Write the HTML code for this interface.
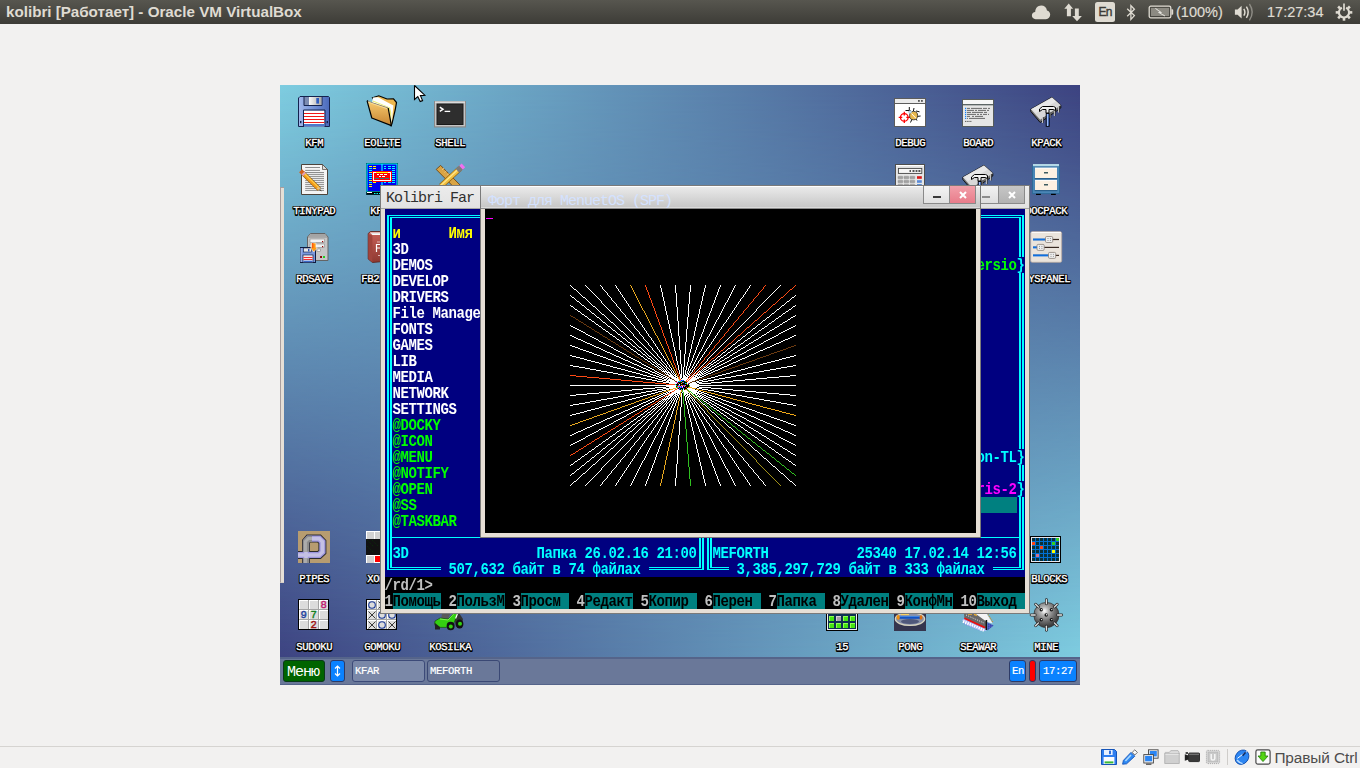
<!DOCTYPE html><html><head><meta charset="utf-8"><title>kolibri</title><style>
*{box-sizing:border-box;margin:0;padding:0}
html,body{width:1360px;height:768px;overflow:hidden;background:#f2f1f0;font-family:"Liberation Sans",sans-serif}
.abs{position:absolute}
#panel{position:absolute;left:0;top:0;width:1360px;height:24px;background:linear-gradient(#57564f,#3d3c37);color:#dfdbd2}
#panel .t{position:absolute;white-space:pre;-webkit-text-stroke:.2px #dfdbd2;font-size:14.5px;line-height:24px;top:0}
#title{position:absolute;left:6px;top:0;font-weight:bold;font-size:15.2px;line-height:24px;white-space:pre;letter-spacing:0px}
#vm{position:absolute;left:280px;top:85px;width:800px;height:600px;overflow:hidden;background:#5e88b1}
#wall1{position:absolute;left:0;top:0;width:800px;height:573px;background:linear-gradient(to right,#7ecde0,#3d4381)}
#wall2{position:absolute;left:0;top:0;width:800px;height:573px;background:linear-gradient(to right,#3d4381,#7ecde0);-webkit-mask-image:linear-gradient(to bottom,rgba(0,0,0,0),rgba(0,0,0,1));mask-image:linear-gradient(to bottom,rgba(0,0,0,0),rgba(0,0,0,1))}
.lbl{position:absolute;font-family:"Liberation Mono",monospace;font-size:10.6px;letter-spacing:-0.36px;line-height:12px;color:#fff;white-space:pre;transform:translateX(-50%);-webkit-text-stroke:0.3px #fff}
.lbb{color:#000;-webkit-text-stroke:2.1px #000;text-shadow:0 1px 0 #000,.5px 1px 0 #000}
.ic{position:absolute;width:32px;height:32px;overflow:visible}
.win{position:absolute;background:#e6dfd6;border:1px solid #7a7a7a}
.tb{position:absolute;left:0;top:0;right:0;height:23px;background:linear-gradient(#f4f4f4 0,#ebebeb 2px,#e2e2e2 22px);border-bottom:1px solid #a4a4a4}
.tba{background:linear-gradient(#ffffff 0,#fdfdfd 1px,#e9e9e9 1.5px,#c7c7c7 21px,#dadada 21.5px,#dadada 22px);border-bottom:1px solid #8a8a8a}
.tbt{position:absolute;font-family:"Liberation Mono",monospace;font-size:15px;letter-spacing:-1px;line-height:16px;white-space:pre}
.con{position:absolute;font-family:"Liberation Mono",monospace;font-weight:bold;font-size:14px;letter-spacing:-0.4px;line-height:16px;white-space:pre;height:16px;transform:scaleY(1.19);transform-origin:0 0;margin-top:-1px}
.c{color:#0ff}.w{color:#fff}.y{color:#ff0}.g{color:#0f0}.m{color:#f0f}.k{color:#000}.s{color:#c0c0c0}
.ln{position:absolute;background:#0ff}
.btn{position:absolute;top:0;width:27px;height:18px;border:1px solid #8a8a8a;border-top:none}
#task{position:absolute;left:0;top:572px;width:800px;height:28px;background:#6a7899;border-top:2px solid #55648a;border-bottom:1px solid #55648a}
.tbtn{position:absolute;top:1px;height:22px;border:1px solid #2d3a66;border-radius:3px}
.t6{font-family:"Liberation Mono",monospace;font-size:10.6px;letter-spacing:-0.36px;line-height:20px;color:#fff;white-space:pre;position:absolute;-webkit-text-stroke:0.2px #fff}
#sbar{position:absolute;left:0;top:746px;width:1360px;height:1px;background:#d6d4d1}
</style></head><body>
<div id="panel">
<div id="title">kolibri [Работает] - Oracle VM VirtualBox</div>
<svg class="abs" style="left:1031px;top:3px" width="20" height="18" viewBox="0 0 20 18"><path d="M4.6 16.2C2.4 16.2 .9 14.6 .9 12.6C.9 10.6 2.4 9.2 4.2 9.1C4.2 5.4 6.8 2.6 10.2 2.6C13.2 2.6 15.4 4.6 16 7.4C17.9 7.7 19.2 9.4 19.2 11.6C19.2 14.2 17.4 16.2 15 16.2Z" fill="#dfdbd2"/></svg>
<svg class="abs" style="left:1063px;top:2px" width="20" height="21" viewBox="0 0 20 21"><path d="M5.7 1.5L10.1 6.8H7.9V14.3H3.9V6.8H1.3Z" fill="#dfdbd2"/><path d="M11.9 6.4H15.8V13.9H18.9L14 19.2L9.2 13.9H11.9Z" fill="#dfdbd2"/></svg>
<div class="abs" style="left:1095px;top:2px;width:20px;height:20px;border-radius:2.5px;background:#dfdbd2"></div>
<div class="abs" style="left:1098.6px;top:2px;font-size:12px;line-height:21px;color:#3c3b37;letter-spacing:-.9px;white-space:pre;-webkit-text-stroke:.4px #3c3b37">En</div>
<svg class="abs" style="left:1125px;top:4px" width="12" height="17" viewBox="0 0 12 17"><path d="M2.2 4.8L9.4 11.6L5.9 15.4V1.6L9.4 5.2L2.2 12.2" fill="none" stroke="#dfdbd2" stroke-width="1.3" stroke-linejoin="miter"/></svg>
<svg class="abs" style="left:1148px;top:5px" width="26" height="14" viewBox="0 0 26 14"><rect x="1.2" y="1.2" width="21.6" height="11.6" rx="1.6" fill="none" stroke="#dfdbd2" stroke-width="1.3"/><rect x="3" y="3" width="18" height="8" fill="#8c8a82"/><path d="M23.4 4.2H24.4Q25.2 4.2 25.2 5V9Q25.2 9.8 24.4 9.8H23.4Z" fill="#dfdbd2"/><path d="M7.4 3.4L13.6 7.6L12 8.2L17 11L10.4 7.4L12.2 6.8Z" fill="#e8e6e0" stroke="#e8e6e0" stroke-width=".6"/></svg>
<div class="t" style="left:1176px">(100%)</div>
<svg class="abs" style="left:1234px;top:2px" width="22" height="20" viewBox="0 0 22 20"><path d="M.9 7.6H3.6L7.6 3.8V16.6L3.6 12.8H.9Z" fill="#dfdbd2"/><path d="M9.8 6.8Q12 10.2 9.8 13.6" fill="none" stroke="#dfdbd2" stroke-width="1.5"/><path d="M12.4 4.6Q16 10.2 12.4 15.8" fill="none" stroke="#dfdbd2" stroke-width="1.5"/><path d="M15.4 2Q21 10.2 15.4 18.4" fill="none" stroke="#8e8c85" stroke-width="1.4"/></svg>
<div class="t" style="left:1267px">17:27:34</div>
<svg class="abs" style="left:1335px;top:3px" width="18" height="19" viewBox="0 0 18 19"><path d="M14.60 9.40L17.30 9.40" stroke="#dfdbd2" stroke-width="2.6"/><path d="M12.96 13.36L14.87 15.27" stroke="#dfdbd2" stroke-width="2.6"/><path d="M9.00 15.00L9.00 17.70" stroke="#dfdbd2" stroke-width="2.6"/><path d="M5.04 13.36L3.13 15.27" stroke="#dfdbd2" stroke-width="2.6"/><path d="M3.40 9.40L0.70 9.40" stroke="#dfdbd2" stroke-width="2.6"/><path d="M5.04 5.44L3.13 3.53" stroke="#dfdbd2" stroke-width="2.6"/><path d="M12.96 5.44L14.87 3.53" stroke="#dfdbd2" stroke-width="2.6"/><path d="M6.9 4.7A5.1 5.1 0 1 0 11.1 4.7" fill="none" stroke="#dfdbd2" stroke-width="2.1"/><path d="M9 .6V7.8" stroke="#dfdbd2" stroke-width="1.7"/></svg>
</div>
<div id="vm">
<div id="wall1"></div><div id="wall2"></div>
<div class="abs" style="left:0;top:102px;width:4px;height:396px;background:#e6dfd6;border-left:1px solid #a89e9e;border-top:1px solid #a89e9e;border-bottom:1px solid #d8d0c8"></div>
<svg class="ic" style="left:18px;top:11px" width="32" height="32" viewBox="0 0 32 32"><defs><linearGradient id="f1" x1="0" x2="1" y1="0" y2="0"><stop offset="0" stop-color="#a2b9ec"/><stop offset=".5" stop-color="#7391d6"/><stop offset="1" stop-color="#4a69bb"/></linearGradient><linearGradient id="f1m" x1="0" x2="1" y1="0" y2="0"><stop offset="0" stop-color="#fafafa"/><stop offset="1" stop-color="#a8a8a8"/></linearGradient></defs><path d="M2 .5H30.5L31.5 1.5V30.5H.5V2Z" fill="url(#f1)" stroke="#14224e"/><path d="M6 1V9.5H24V1" fill="#7c8cb2" stroke="#14224e"/><rect x="11" y="1" width="12.5" height="8" fill="url(#f1m)"/><rect x="18.3" y="2" width="2.7" height="5.6" fill="#2e5cc0"/><rect x="6" y="14.5" width="20.5" height="16" fill="#fff"/><path d="M5.5 30.5V14H27V30.5" fill="none" stroke="#14224e"/><path d="M6 17.5H26.5M6 20.5H26.5M6 23.5H26.5M6 26.5H26.5" stroke="#f01818" stroke-width="1"/><rect x="6" y="28" width="20.5" height="2.5" fill="#4c7acc"/><rect x="2" y="25" width="1.4" height="2.2" fill="#14224e"/><rect x="28.6" y="25" width="1.4" height="2.2" fill="#14224e"/></svg>
<svg class="abs" style="left:20.5px;top:51.0px" width="26" height="14" viewBox="0 0 26 14"><text x="13.2" y="11" text-anchor="middle" font-family="Liberation Mono" font-size="10.6" letter-spacing="-0.36" fill="#000" stroke="#000" stroke-width="2" stroke-linejoin="round">KFM</text><text x="13.2" y="10" text-anchor="middle" font-family="Liberation Mono" font-size="10.6" letter-spacing="-0.36" fill="#000" stroke="#000" stroke-width="2.2" stroke-linejoin="round">KFM</text><text x="13.2" y="10" text-anchor="middle" font-family="Liberation Mono" font-size="10.6" letter-spacing="-0.36" fill="#fff" stroke="#fff" stroke-width=".35">KFM</text></svg>
<svg class="ic" style="left:86px;top:11px" width="32" height="32" viewBox="0 0 32 32"><defs><linearGradient id="fo" x1="0" x2="0" y1="0" y2="1"><stop offset="0" stop-color="#f8cc70"/><stop offset="1" stop-color="#c68432"/></linearGradient></defs><path d="M6.5 1.8L12.8 -.2L21 3L27.5 2.8L30.5 6.5L29.2 14L26 27.5L25 29.8Z" fill="#eeb850" stroke="#000" stroke-width="1.2"/><path d="M7 1.4L12 1.2L27.4 9.6L25.8 27L22.2 12L6 6.4Z" fill="#fff"/><path d="M6.4 5.6L22.4 11.6L25.6 26L25.2 16L24 11.4L7 4.6Z" fill="#e6ec6c" opacity=".9"/><path d="M1.4 4.8L22 11.6L25.4 29.6L5.8 22Z" fill="url(#fo)"/><path d="M2 5.4L22 12" stroke="#5a6a80" stroke-width=".7" fill="none"/><path d="M1.6 6L21.6 12.8" stroke="#fbe09a" stroke-width=".9" fill="none"/><path d="M1.8 4.4L1.2 5.4L5.8 22L25.4 29.6L22.2 12" fill="none" stroke="#000" stroke-width="1.2" stroke-linejoin="round"/></svg>
<svg class="abs" style="left:79.5px;top:51.0px" width="44" height="14" viewBox="0 0 44 14"><text x="22.2" y="11" text-anchor="middle" font-family="Liberation Mono" font-size="10.6" letter-spacing="-0.36" fill="#000" stroke="#000" stroke-width="2" stroke-linejoin="round">EOLITE</text><text x="22.2" y="10" text-anchor="middle" font-family="Liberation Mono" font-size="10.6" letter-spacing="-0.36" fill="#000" stroke="#000" stroke-width="2.2" stroke-linejoin="round">EOLITE</text><text x="22.2" y="10" text-anchor="middle" font-family="Liberation Mono" font-size="10.6" letter-spacing="-0.36" fill="#fff" stroke="#fff" stroke-width=".35">EOLITE</text></svg>
<svg class="ic" style="left:154px;top:11px" width="32" height="32" viewBox="0 0 32 32"><rect x=".5" y="5.5" width="31" height="25.5" fill="#c4c4c4" stroke="#8a8a8a"/><path d="M1 6H31" stroke="#f0f0f0"/><path d="M1 30.5H31" stroke="#9a9a9a"/><rect x="3" y="8" width="26" height="20.5" fill="#2e2e2e" stroke="#1a1a1a"/><path d="M5.8 11.2L9 13.3L5.8 15.4" stroke="#fff" stroke-width="1.5" fill="none"/><path d="M10.6 15.4H16.2" stroke="#fff" stroke-width="1.3"/></svg>
<svg class="abs" style="left:150.5px;top:51.0px" width="38" height="14" viewBox="0 0 38 14"><text x="19.2" y="11" text-anchor="middle" font-family="Liberation Mono" font-size="10.6" letter-spacing="-0.36" fill="#000" stroke="#000" stroke-width="2" stroke-linejoin="round">SHELL</text><text x="19.2" y="10" text-anchor="middle" font-family="Liberation Mono" font-size="10.6" letter-spacing="-0.36" fill="#000" stroke="#000" stroke-width="2.2" stroke-linejoin="round">SHELL</text><text x="19.2" y="10" text-anchor="middle" font-family="Liberation Mono" font-size="10.6" letter-spacing="-0.36" fill="#fff" stroke="#fff" stroke-width=".35">SHELL</text></svg>
<svg class="ic" style="left:18px;top:79px" width="32" height="32" viewBox="0 0 32 32"><path d="M3.5 .5H24.5L29.5 5.5V30.5H3.5Z" fill="#f4f4f4" stroke="#4c443c"/><path d="M24.5 .5V5.5H29.5Z" fill="#dcdcdc" stroke="#4c443c" stroke-width=".7"/><g stroke="#8c8c8c" stroke-width="1"><path d="M7.2 3.5H22.0"/><path d="M7.2 6.4H22.0"/><path d="M7.2 8.5H26.0"/><path d="M7.2 10.4H26.0"/><path d="M7.2 12.4H26.0"/><path d="M7.2 14.4H26.0"/><path d="M7.2 16.4H26.0"/><path d="M7.2 18.4H26.0"/><path d="M7.2 20.4H26.0"/><path d="M7.2 22.4H26.0"/><path d="M7.2 24.4H26.0"/><path d="M7.2 26.4H26.0"/></g><path d="M4.6 8.8L21.2 25.2" stroke="#8a5a10" stroke-width="4.6"/><path d="M4.6 8.8L21.2 25.2" stroke="#f59a18" stroke-width="3.4"/><path d="M5.2 8.2L21.6 24.4" stroke="#ffd04a" stroke-width="1.2"/><path d="M2.6 6.8L5 9.2" stroke="#d2601a" stroke-width="4.2"/><path d="M5 9.2L6.4 10.6" stroke="#e0a0c0" stroke-width="4"/><path d="M20.6 22.4L23.4 27L18.6 24.4Z" fill="#e8c080"/><path d="M22 25.2L24 27.4L21.2 26Z" fill="#222"/></svg>
<svg class="abs" style="left:8.5px;top:119.0px" width="50" height="14" viewBox="0 0 50 14"><text x="25.2" y="11" text-anchor="middle" font-family="Liberation Mono" font-size="10.6" letter-spacing="-0.36" fill="#000" stroke="#000" stroke-width="2" stroke-linejoin="round">TINYPAD</text><text x="25.2" y="10" text-anchor="middle" font-family="Liberation Mono" font-size="10.6" letter-spacing="-0.36" fill="#000" stroke="#000" stroke-width="2.2" stroke-linejoin="round">TINYPAD</text><text x="25.2" y="10" text-anchor="middle" font-family="Liberation Mono" font-size="10.6" letter-spacing="-0.36" fill="#fff" stroke="#fff" stroke-width=".35">TINYPAD</text></svg>
<svg class="ic" style="left:86px;top:78px" width="32" height="32" viewBox="0 0 32 32"><rect x="0" y="0" width="32" height="32" fill="#003848"/><rect x="1" y="1" width="30" height="27.5" fill="#0000f0" stroke="#0ff" stroke-width="1"/><path d="M16 1V28" stroke="#0ff" stroke-width="1.2"/><rect x="1" y="28.5" width="30" height="3" fill="#000"/><path d="M1 29.5H6" stroke="#fff"/><path d="M8 30.5H14" stroke="#0ff" stroke-dasharray="1.5 1"/><path d="M3 3.5H6" stroke="#ff0"/><path d="M3 5.5H6" stroke="#0ff"/><path d="M3 7.5H6" stroke="#0ff"/><path d="M3 9.5H6" stroke="#ff0"/><path d="M3 11.5H6" stroke="#0ff"/><path d="M3 13.5H6" stroke="#0ff"/><path d="M3 15.5H6" stroke="#0ff"/><path d="M3 17.5H6" stroke="#ff0"/><path d="M3 19.5H6" stroke="#0ff"/><path d="M3 21.5H6" stroke="#ff0"/><path d="M3 23.5H6" stroke="#ff0"/><path d="M7 3.5H10" stroke="#ff0"/><path d="M7 5.5H10" stroke="#ff0"/><path d="M7 19.5H10" stroke="#ff0"/><path d="M18 3.5H20M22 3.5H25M26 3.5H29" stroke="#0ff"/><path d="M18 5.5H20M22 5.5H25M26 5.5H29" stroke="#0ff"/><path d="M18 19.5H20M22 19.5H25M26 19.5H29" stroke="#0ff"/><path d="M26 7.5H29" stroke="#0ff"/><path d="M26 9.5H29" stroke="#0ff"/><path d="M26 11.5H29" stroke="#0ff"/><path d="M26 13.5H29" stroke="#0ff"/><path d="M26 15.5H29" stroke="#0ff"/><path d="M26 17.5H29" stroke="#0ff"/><rect x="6" y="8" width="20" height="11" fill="#f00"/><rect x="7.5" y="9.5" width="17" height="8" fill="none" stroke="#fff"/><path d="M10 9.5H22" stroke="#ff0"/><path d="M11 11.5H13M14 11.5H17M18 11.5H21M13 13.5H15M16 13.5H19" stroke="#fff"/><path d="M9 15.5H13M14 15.5H18M19 15.5H23" stroke="#208080"/></svg>
<svg class="abs" style="left:85.5px;top:119.0px" width="32" height="14" viewBox="0 0 32 14"><text x="16.2" y="11" text-anchor="middle" font-family="Liberation Mono" font-size="10.6" letter-spacing="-0.36" fill="#000" stroke="#000" stroke-width="2" stroke-linejoin="round">KFAR</text><text x="16.2" y="10" text-anchor="middle" font-family="Liberation Mono" font-size="10.6" letter-spacing="-0.36" fill="#000" stroke="#000" stroke-width="2.2" stroke-linejoin="round">KFAR</text><text x="16.2" y="10" text-anchor="middle" font-family="Liberation Mono" font-size="10.6" letter-spacing="-0.36" fill="#fff" stroke="#fff" stroke-width=".35">KFAR</text></svg>
<svg class="ic" style="left:154px;top:79px" width="32" height="32" viewBox="0 0 32 32"><path d="M2.2 5.4L6.6 1.4L29 24L24.6 28Z" fill="#d9a444" stroke="#74460e" stroke-width=".9"/><path d="M8 6L10 4M10.6 8.6L12.6 6.6M13.2 11.2L15.2 9.2" stroke="#f0c890" stroke-width=".8"/><path d="M26 4.4L7 22" stroke="#8a5a10" stroke-width="5.4"/><path d="M26 4.4L7 22" stroke="#f0c040" stroke-width="4.2"/><path d="M25.6 4L6.6 21.6" stroke="#ffe690" stroke-width="1.2"/><path d="M27.6 3L23.4 6.8" stroke="#7c7c7c" stroke-width="5.2"/><path d="M29.4 1.4L27 3.6" stroke="#f070f0" stroke-width="5.2"/></svg>
<svg class="ic" style="left:18px;top:147px" width="32" height="32" viewBox="0 0 32 32"><path d="M9.5 5L12.5 1.5H27L30 5V28.5H9.5Z" fill="#c6c6c6" stroke="#646464"/><path d="M10 5H29.5" stroke="#8c8c8c"/><path d="M12.5 2H27L29 4.5H10.5Z" fill="#a4a4a4"/><rect x="12" y="7" width="14.5" height="3.4" fill="#f2f2f2" stroke="#8a8a8a" stroke-width=".6"/><rect x="12" y="12" width="14.5" height="3.4" fill="#f2f2f2" stroke="#8a8a8a" stroke-width=".6"/><rect x="24" y="9" width="1.2" height="1.2" fill="#900"/><rect x="24" y="14" width="1.2" height="1.2" fill="#900"/><rect x="19" y="17" width="3.4" height="2.6" fill="#f4f4f4" stroke="#777" stroke-width=".5"/><rect x="22" y="24" width="2" height="2" fill="#8c1010"/><rect x="25" y="24" width="2" height="2" fill="#20d020"/><rect x="2.5" y="15.5" width="15" height="15" fill="#7a98dc" stroke="#101c40"/><path d="M3 16V30" stroke="#a8c0f0"/><rect x="5.6" y="16" width="8" height="4" fill="#e8e8e8" stroke="#101c40" stroke-width=".6"/><rect x="10" y="17" width="1.4" height="2.4" fill="#2850b8"/><rect x="5" y="23" width="10" height="7.4" fill="#fff" stroke="#101c40" stroke-width=".7"/><path d="M5.4 25.4H14.6M5.4 27.4H14.6" stroke="#f01818"/><rect x="5.4" y="28.6" width="9.2" height="1.6" fill="#3c68c8"/><path d="M13.4 11H17.9V15.8H19.4L15.8 20L12.6 15.8H13.4Z" fill="#ff9a10" stroke="#fff" stroke-width=".5"/><path d="M14 11H15.4V16H14Z" fill="#ff5a10"/></svg>
<svg class="abs" style="left:11.5px;top:187.0px" width="44" height="14" viewBox="0 0 44 14"><text x="22.2" y="11" text-anchor="middle" font-family="Liberation Mono" font-size="10.6" letter-spacing="-0.36" fill="#000" stroke="#000" stroke-width="2" stroke-linejoin="round">RDSAVE</text><text x="22.2" y="10" text-anchor="middle" font-family="Liberation Mono" font-size="10.6" letter-spacing="-0.36" fill="#000" stroke="#000" stroke-width="2.2" stroke-linejoin="round">RDSAVE</text><text x="22.2" y="10" text-anchor="middle" font-family="Liberation Mono" font-size="10.6" letter-spacing="-0.36" fill="#fff" stroke="#fff" stroke-width=".35">RDSAVE</text></svg>
<svg class="ic" style="left:86px;top:147px" width="32" height="32" viewBox="0 0 32 32"><defs><linearGradient id="bk" x1="0" x2="0" y1="0" y2="1"><stop offset="0" stop-color="#c8625a"/><stop offset="1" stop-color="#8e3830"/></linearGradient></defs><path d="M2.2 1.5L4.5 -.5H28V28.5L6.5 30.5L2.2 27Z" fill="url(#bk)" stroke="#5a2018" stroke-width=".8"/><path d="M4 .4H28V3H6.4Z" fill="#fff"/><path d="M4.4 1.6H28" stroke="#c8c8c8" stroke-width=".5"/><path d="M2.4 2L6.4 3.6V30.2L2.4 27Z" fill="#a0443c"/><path d="M10.5 20V12.5H15M10.5 16H14.5" stroke="#fff" stroke-width="1.2" fill="none"/><path d="M11 10H14M12 23.5H14" stroke="#f0d0d0" stroke-width=".8"/></svg>
<svg class="abs" style="left:76.5px;top:187.0px" width="50" height="14" viewBox="0 0 50 14"><text x="25.2" y="11" text-anchor="middle" font-family="Liberation Mono" font-size="10.6" letter-spacing="-0.36" fill="#000" stroke="#000" stroke-width="2" stroke-linejoin="round">FB2READ</text><text x="25.2" y="10" text-anchor="middle" font-family="Liberation Mono" font-size="10.6" letter-spacing="-0.36" fill="#000" stroke="#000" stroke-width="2.2" stroke-linejoin="round">FB2READ</text><text x="25.2" y="10" text-anchor="middle" font-family="Liberation Mono" font-size="10.6" letter-spacing="-0.36" fill="#fff" stroke="#fff" stroke-width=".35">FB2READ</text></svg>
<svg class="ic" style="left:614px;top:11px" width="32" height="32" viewBox="0 0 32 32"><rect x=".5" y="2.5" width="31" height="28" fill="#fff" stroke="#5c5c5c"/><rect x="1" y="3" width="30" height="4" fill="#ebebeb"/><path d="M.5 7.5H31.5" stroke="#5c5c5c"/><rect x="24" y="4" width="1.8" height="1.8" fill="#555"/><rect x="27" y="4" width="1.8" height="1.8" fill="#555"/><circle cx="10.3" cy="21.4" r="3.8" fill="none" stroke="#f00" stroke-width="1.3"/><path d="M10.3 15.8V19.4M10.3 23.4V27M4.7 21.4H8.3M12.3 21.4H15.9" stroke="#f00" stroke-width="1.3"/><path d="M15.3 11V16.5M11.5 14.5H17M20 12L19.4 15M22 15L25.5 15.8M23.5 20.4L26.6 20M18 23L16.5 26.5M22 23L23 24.6" stroke="#111" stroke-width="1"/><ellipse cx="19.6" cy="19.6" rx="4" ry="4.2" fill="#e8b84c" stroke="#222" stroke-width=".8"/><path d="M17.6 17.6L22 22.4" stroke="#fff" stroke-width="1"/><circle cx="16.2" cy="15.8" r="1.6" fill="#b8d8f0"/></svg>
<svg class="abs" style="left:610.5px;top:51.0px" width="38" height="14" viewBox="0 0 38 14"><text x="19.2" y="11" text-anchor="middle" font-family="Liberation Mono" font-size="10.6" letter-spacing="-0.36" fill="#000" stroke="#000" stroke-width="2" stroke-linejoin="round">DEBUG</text><text x="19.2" y="10" text-anchor="middle" font-family="Liberation Mono" font-size="10.6" letter-spacing="-0.36" fill="#000" stroke="#000" stroke-width="2.2" stroke-linejoin="round">DEBUG</text><text x="19.2" y="10" text-anchor="middle" font-family="Liberation Mono" font-size="10.6" letter-spacing="-0.36" fill="#fff" stroke="#fff" stroke-width=".35">DEBUG</text></svg>
<svg class="ic" style="left:682px;top:11px" width="32" height="32" viewBox="0 0 32 32"><rect x=".5" y="3.5" width="31" height="27" fill="#e6e6e6" stroke="#555b5b"/><rect x="1" y="4" width="30" height="4" fill="#f6f6f6"/><path d="M.5 8.7H31.5" stroke="#4c5656" stroke-width="1.2"/><rect x="3" y="11.8" width="1.2" height="1.2" fill="#1080ff"/><path d="M5 12.4H28" stroke="#6a6a6a" stroke-dasharray="3 1 11 1 4 1 3"/><rect x="3" y="13.8" width="1.2" height="1.2" fill="#1080ff"/><path d="M5 14.4H27" stroke="#6a6a6a" stroke-dasharray="7 1 2 1 8 1 3"/><rect x="3" y="15.8" width="1.2" height="1.2" fill="#1080ff"/><path d="M5 16.4H25" stroke="#6a6a6a" stroke-dasharray="4 1 11 1 5"/><rect x="3" y="17.8" width="1.2" height="1.2" fill="#1080ff"/><path d="M5 18.4H27" stroke="#6a6a6a" stroke-dasharray="9 1 2 1 2 1 4 1 2"/><rect x="3" y="19.8" width="1.2" height="1.2" fill="#1080ff"/><path d="M5 20.4H21" stroke="#6a6a6a" stroke-dasharray="3 2 2 1 8"/><rect x="3" y="21.8" width="1.2" height="1.2" fill="#1080ff"/><path d="M5 22.4H23" stroke="#6a6a6a" stroke-dasharray="1 1 17"/><path d="M3 25.4H10" stroke="#555" stroke-dasharray="1.4 .8"/></svg>
<svg class="abs" style="left:678.5px;top:51.0px" width="38" height="14" viewBox="0 0 38 14"><text x="19.2" y="11" text-anchor="middle" font-family="Liberation Mono" font-size="10.6" letter-spacing="-0.36" fill="#000" stroke="#000" stroke-width="2" stroke-linejoin="round">BOARD</text><text x="19.2" y="10" text-anchor="middle" font-family="Liberation Mono" font-size="10.6" letter-spacing="-0.36" fill="#000" stroke="#000" stroke-width="2.2" stroke-linejoin="round">BOARD</text><text x="19.2" y="10" text-anchor="middle" font-family="Liberation Mono" font-size="10.6" letter-spacing="-0.36" fill="#fff" stroke="#fff" stroke-width=".35">BOARD</text></svg>
<svg class="ic" style="left:750px;top:11px" width="32" height="32" viewBox="0 0 32 32"><path d="M.8 13.2L22 1.2L30.8 9.2V12L10.2 26.5L.8 15.5Z" fill="#6a6a6a" stroke="#000" stroke-width=".8"/><path d="M.8 13.2L22 1.2L30.8 9.2L10.2 23.8Z" fill="#d8d8d8"/><path d="M2 13L22 2L26 5.5L6 17Z" fill="#f0f0f0" opacity=".7"/><path d="M12.6 21V27M20 16V22M24.5 13V20M28.6 10V16.5" stroke="#d0d0d0" stroke-width="1.3"/><path d="M13.4 21V27M20.8 16V22M25.3 13V20M29.4 10V16.5" stroke="#222" stroke-width=".7"/><path d="M9.5 15.5V13L12.5 10.5H23.5L25.5 11.5V14.5L23 13.5H19V17H16V13.5H12.5Z" fill="#f2f2f2" stroke="#000" stroke-width="1"/><rect x="16.2" y="17.5" width="3" height="12.8" fill="#5a86e6" stroke="#000" stroke-width=".9"/><rect x="17" y="18" width="1" height="12" fill="#9cbcf8"/></svg>
<svg class="abs" style="left:746.5px;top:51.0px" width="38" height="14" viewBox="0 0 38 14"><text x="19.2" y="11" text-anchor="middle" font-family="Liberation Mono" font-size="10.6" letter-spacing="-0.36" fill="#000" stroke="#000" stroke-width="2" stroke-linejoin="round">KPACK</text><text x="19.2" y="10" text-anchor="middle" font-family="Liberation Mono" font-size="10.6" letter-spacing="-0.36" fill="#000" stroke="#000" stroke-width="2.2" stroke-linejoin="round">KPACK</text><text x="19.2" y="10" text-anchor="middle" font-family="Liberation Mono" font-size="10.6" letter-spacing="-0.36" fill="#fff" stroke="#fff" stroke-width=".35">KPACK</text></svg>
<svg class="ic" style="left:614px;top:79px" width="32" height="32" viewBox="0 0 32 32"><rect x="1.5" y=".5" width="29" height="31" fill="#e6e6e6" stroke="#4e4e4e"/><path d="M2 1.5H30" stroke="#fff"/><rect x="4.4" y="4.4" width="23.4" height="5" fill="#f6f6f6" stroke="#444" stroke-width=".9"/><path d="M15.5 7H17M18.5 7H20.5M21.6 7H23.4M24.4 7H26.4" stroke="#222" stroke-width="1.6"/><rect x="4" y="12.2" width="4.8" height="2.6" rx=".6" fill="#a2a2a2" stroke="#8a8a8a" stroke-width=".4"/><rect x="4" y="16.2" width="4.8" height="2.6" rx=".6" fill="#a2a2a2" stroke="#8a8a8a" stroke-width=".4"/><rect x="4" y="20.2" width="4.8" height="2.6" rx=".6" fill="#a2a2a2" stroke="#8a8a8a" stroke-width=".4"/><rect x="10" y="12.2" width="4.8" height="2.6" rx=".6" fill="#a2a2a2" stroke="#8a8a8a" stroke-width=".4"/><rect x="10" y="16.2" width="4.8" height="2.6" rx=".6" fill="#a2a2a2" stroke="#8a8a8a" stroke-width=".4"/><rect x="10" y="20.2" width="4.8" height="2.6" rx=".6" fill="#a2a2a2" stroke="#8a8a8a" stroke-width=".4"/><rect x="16" y="12.2" width="4.8" height="2.6" rx=".6" fill="#a2a2a2" stroke="#8a8a8a" stroke-width=".4"/><rect x="16" y="16.2" width="4.8" height="2.6" rx=".6" fill="#a2a2a2" stroke="#8a8a8a" stroke-width=".4"/><rect x="16" y="20.2" width="4.8" height="2.6" rx=".6" fill="#a2a2a2" stroke="#8a8a8a" stroke-width=".4"/><rect x="23" y="12.2" width="4.8" height="2.6" fill="#d81818"/><rect x="23" y="16.2" width="4.8" height="2.6" fill="#5a8ad8"/><rect x="23" y="20.2" width="4.8" height="2.6" fill="#3a78d0"/></svg>
<svg class="ic" style="left:682px;top:79px" width="32" height="32" viewBox="0 0 32 32"><path d="M.8 13.2L22 1.2L30.8 9.2V12L10.2 26.5L.8 15.5Z" fill="#6a6a6a" stroke="#000" stroke-width=".8"/><path d="M.8 13.2L22 1.2L30.8 9.2L10.2 23.8Z" fill="#d8d8d8"/><path d="M2 13L22 2L26 5.5L6 17Z" fill="#f0f0f0" opacity=".7"/><path d="M12.6 21V27M20 16V22M24.5 13V20M28.6 10V16.5" stroke="#d0d0d0" stroke-width="1.3"/><path d="M13.4 21V27M20.8 16V22M25.3 13V20M29.4 10V16.5" stroke="#222" stroke-width=".7"/><path d="M9.5 15.5V13L12.5 10.5H23.5L25.5 11.5V14.5L23 13.5H19V17H16V13.5H12.5Z" fill="#f2f2f2" stroke="#000" stroke-width="1"/><rect x="16.2" y="17.5" width="3" height="12.8" fill="#5a86e6" stroke="#000" stroke-width=".9"/><rect x="17" y="18" width="1" height="12" fill="#9cbcf8"/></svg>
<svg class="ic" style="left:750px;top:79px" width="32" height="32" viewBox="0 0 32 32"><rect x="2.5" y="2" width="27" height="27.6" fill="#4a86b6" stroke="#2e6a98"/><rect x="3" y="0" width="26" height="2.2" fill="#b4d8e6"/><rect x="5" y="3.8" width="22" height="10.2" fill="#fdf1e2"/><path d="M5 4.2H27" stroke="#fff" stroke-width=".8"/><path d="M4.6 14.6H27.4" stroke="#2a5f8c" stroke-width="1.2"/><rect x="5" y="16" width="22" height="10" fill="#fdf1e2"/><path d="M5 16.4H27" stroke="#fff" stroke-width=".8"/><path d="M4.6 26.6H27.4" stroke="#2a5f8c" stroke-width="1.2"/><rect x="14" y="8" width="4" height="1.5" fill="#3e5c60"/><rect x="14" y="20" width="4" height="1.5" fill="#3e5c60"/><rect x="6" y="29.8" width="4.8" height="1.2" fill="#000"/><rect x="21" y="29.8" width="4.8" height="1.2" fill="#000"/></svg>
<svg class="abs" style="left:740.5px;top:119.0px" width="50" height="14" viewBox="0 0 50 14"><text x="25.2" y="11" text-anchor="middle" font-family="Liberation Mono" font-size="10.6" letter-spacing="-0.36" fill="#000" stroke="#000" stroke-width="2" stroke-linejoin="round">DOCPACK</text><text x="25.2" y="10" text-anchor="middle" font-family="Liberation Mono" font-size="10.6" letter-spacing="-0.36" fill="#000" stroke="#000" stroke-width="2.2" stroke-linejoin="round">DOCPACK</text><text x="25.2" y="10" text-anchor="middle" font-family="Liberation Mono" font-size="10.6" letter-spacing="-0.36" fill="#fff" stroke="#fff" stroke-width=".35">DOCPACK</text></svg>
<svg class="ic" style="left:750px;top:147px" width="32" height="32" viewBox="0 0 32 32"><rect x=".7" y="-.3" width="31" height="30.6" rx="1.6" fill="#ebe4dc" stroke="#b8a8a0" stroke-width=".8"/><path d="M1.5 .4H31" stroke="#fff"/><path d="M3 7.5H29" stroke="#3a2a22" stroke-width="1.2"/><path d="M3 7.5H15.5" stroke="#1070e0" stroke-width="2"/><rect x="15.5" y="4.5" width="7.2" height="6" rx="1.2" fill="#efefef" stroke="#8a8078" stroke-width=".8"/><path d="M17.5 6.5h1M19.9 6.5h1M17.5 8.5h1M19.9 8.5h1" stroke="#888" stroke-width=".9"/><path d="M3 15.4H29" stroke="#3a2a22" stroke-width="1.2"/><path d="M3 15.4H7.0" stroke="#1070e0" stroke-width="2"/><rect x="7.0" y="12.4" width="7.2" height="6" rx="1.2" fill="#efefef" stroke="#8a8078" stroke-width=".8"/><path d="M9.0 14.4h1M11.4 14.4h1M9.0 16.4h1M11.4 16.4h1" stroke="#888" stroke-width=".9"/><path d="M3 23.4H29" stroke="#3a2a22" stroke-width="1.2"/><path d="M3 23.4H18.5" stroke="#1070e0" stroke-width="2"/><rect x="18.5" y="20.4" width="7.2" height="6" rx="1.2" fill="#efefef" stroke="#8a8078" stroke-width=".8"/><path d="M20.5 22.4h1M22.9 22.4h1M20.5 24.4h1M22.9 24.4h1" stroke="#888" stroke-width=".9"/></svg>
<svg class="abs" style="left:737.5px;top:187.0px" width="56" height="14" viewBox="0 0 56 14"><text x="28.2" y="11" text-anchor="middle" font-family="Liberation Mono" font-size="10.6" letter-spacing="-0.36" fill="#000" stroke="#000" stroke-width="2" stroke-linejoin="round">SYSPANEL</text><text x="28.2" y="10" text-anchor="middle" font-family="Liberation Mono" font-size="10.6" letter-spacing="-0.36" fill="#000" stroke="#000" stroke-width="2.2" stroke-linejoin="round">SYSPANEL</text><text x="28.2" y="10" text-anchor="middle" font-family="Liberation Mono" font-size="10.6" letter-spacing="-0.36" fill="#fff" stroke="#fff" stroke-width=".35">SYSPANEL</text></svg>
<svg class="ic" style="left:18px;top:446px" width="32" height="32" viewBox="0 0 32 32"><rect width="32" height="32" fill="#b79c70"/><path d="M8 32V10.5L10.5 7.6H21.2L24.4 10.8V21L21.2 24H0" fill="none" stroke="#2c2c2c" stroke-width="8"/><path d="M8 32V10.5L10.5 7.6H21.2L24.4 10.8V21L21.2 24H0" fill="none" stroke="#9c94dc" stroke-width="6.2"/><path d="M8 32V10.5L10.5 7.6H21.2L24.4 10.8V21L21.2 24H0" fill="none" stroke="#c4c0e4" stroke-width="3.6"/><path d="M8 32V27.2M8 20.8V10.5L10.5 7.8H14" fill="none" stroke="#8c8c8c" stroke-width="6.2"/><path d="M7.4 32V27.2M7.4 20.8V10.5L10.5 7.4H14" fill="none" stroke="#acacac" stroke-width="3"/></svg>
<svg class="abs" style="left:14.5px;top:487.0px" width="38" height="14" viewBox="0 0 38 14"><text x="19.2" y="11" text-anchor="middle" font-family="Liberation Mono" font-size="10.6" letter-spacing="-0.36" fill="#000" stroke="#000" stroke-width="2" stroke-linejoin="round">PIPES</text><text x="19.2" y="10" text-anchor="middle" font-family="Liberation Mono" font-size="10.6" letter-spacing="-0.36" fill="#000" stroke="#000" stroke-width="2.2" stroke-linejoin="round">PIPES</text><text x="19.2" y="10" text-anchor="middle" font-family="Liberation Mono" font-size="10.6" letter-spacing="-0.36" fill="#fff" stroke="#fff" stroke-width=".35">PIPES</text></svg>
<svg class="ic" style="left:86px;top:446px" width="32" height="32" viewBox="0 0 32 32"><rect x="0" y="8" width="32" height="16" fill="#111"/><path d="M1 9L8 16M6 9L12 15M1 15L8 22" stroke="#083808" stroke-width=".7" stroke-dasharray="1.2 1.2"/><rect x="0" y="0" width="8" height="8" fill="#d2d2d2"/><path d="M0 0.5H8M0.5 0V8" stroke="#fff" stroke-width="1"/><rect x="8" y="0" width="8" height="8" fill="#d2d2d2"/><path d="M8 0.5H16M8.5 0V8" stroke="#fff" stroke-width="1"/><rect x="16" y="0" width="8" height="8" fill="#d2d2d2"/><path d="M16 0.5H24M16.5 0V8" stroke="#fff" stroke-width="1"/><rect x="24" y="0" width="8" height="8" fill="#d2d2d2"/><path d="M24 0.5H32M24.5 0V8" stroke="#fff" stroke-width="1"/><rect x="0" y="24" width="8" height="8" fill="#d2d2d2"/><path d="M0 24.5H8M0.5 24V32" stroke="#fff" stroke-width="1"/><rect x="8" y="24" width="8" height="8" fill="#fff"/><rect x="9" y="25" width="7" height="6" fill="#f00"/><rect x="16" y="24" width="8" height="8" fill="#d2d2d2"/><path d="M16 24.5H24M16.5 24V32" stroke="#fff" stroke-width="1"/><rect x="24" y="24" width="8" height="8" fill="#d2d2d2"/><path d="M24 24.5H32M24.5 24V32" stroke="#fff" stroke-width="1"/></svg>
<svg class="abs" style="left:82.5px;top:487.0px" width="38" height="14" viewBox="0 0 38 14"><text x="19.2" y="11" text-anchor="middle" font-family="Liberation Mono" font-size="10.6" letter-spacing="-0.36" fill="#000" stroke="#000" stroke-width="2" stroke-linejoin="round">XONIX</text><text x="19.2" y="10" text-anchor="middle" font-family="Liberation Mono" font-size="10.6" letter-spacing="-0.36" fill="#000" stroke="#000" stroke-width="2.2" stroke-linejoin="round">XONIX</text><text x="19.2" y="10" text-anchor="middle" font-family="Liberation Mono" font-size="10.6" letter-spacing="-0.36" fill="#fff" stroke="#fff" stroke-width=".35">XONIX</text></svg>
<svg class="ic" style="left:750px;top:446px" width="32" height="32" viewBox="0 0 32 32"><rect x=".5" y="5.5" width="30" height="26" fill="#0070d2" stroke="#000"/><rect x="1.5" y="6.5" width="28" height="24" fill="none" stroke="#e8e8f0" stroke-width="1"/><rect x="2" y="7" width="27" height="23" fill="#0070d2"/><rect x="2" y="7" width="3" height="3" fill="#0a3038"/><rect x="6" y="7" width="3" height="3" fill="#0a3038"/><rect x="10" y="7" width="3" height="3" fill="#0a3038"/><rect x="14" y="7" width="3" height="3" fill="#0a3038"/><rect x="18" y="7" width="3" height="3" fill="#0a3038"/><rect x="22" y="7" width="3" height="3" fill="#0a3038"/><rect x="26" y="7" width="3" height="3" fill="#30d020"/><rect x="2" y="11" width="3" height="3" fill="#ff4210"/><rect x="6" y="11" width="3" height="3" fill="#0a3038"/><rect x="10" y="11" width="3" height="3" fill="#0a3038"/><rect x="14" y="11" width="3" height="3" fill="#0a3038"/><rect x="18" y="11" width="3" height="3" fill="#0a3038"/><rect x="22" y="11" width="3" height="3" fill="#30d020"/><rect x="26" y="11" width="3" height="3" fill="#0a3038"/><rect x="2" y="15" width="3" height="3" fill="#0a3038"/><rect x="6" y="15" width="3" height="3" fill="#0a3038"/><rect x="10" y="15" width="3" height="3" fill="#ff4210"/><rect x="14" y="15" width="3" height="3" fill="#0a3038"/><rect x="18" y="15" width="3" height="3" fill="#0a3038"/><rect x="22" y="15" width="3" height="3" fill="#0a3038"/><rect x="26" y="15" width="3" height="3" fill="#0a3038"/><rect x="2" y="19" width="3" height="3" fill="#0a3038"/><rect x="6" y="19" width="3" height="3" fill="#0a3038"/><rect x="10" y="19" width="3" height="3" fill="#0a3038"/><rect x="14" y="19" width="3" height="3" fill="#0a3038"/><rect x="18" y="19" width="3" height="3" fill="#0a3038"/><rect x="22" y="19" width="3" height="3" fill="#ffff00"/><rect x="26" y="19" width="3" height="3" fill="#0a3038"/><rect x="2" y="23" width="3" height="3" fill="#0a3038"/><rect x="6" y="23" width="3" height="3" fill="#d07090"/><rect x="10" y="23" width="3" height="3" fill="#0a3038"/><rect x="14" y="23" width="3" height="3" fill="#0a3038"/><rect x="18" y="23" width="3" height="3" fill="#0a3038"/><rect x="22" y="23" width="3" height="3" fill="#0a3038"/><rect x="26" y="23" width="3" height="3" fill="#0a3038"/><rect x="2" y="27" width="3" height="3" fill="#0a3038"/><rect x="6" y="27" width="3" height="3" fill="#0a3038"/><rect x="10" y="27" width="3" height="3" fill="#0a3038"/><rect x="14" y="27" width="3" height="3" fill="#0a3038"/><rect x="18" y="27" width="3" height="3" fill="#0a3038"/><rect x="22" y="27" width="3" height="3" fill="#0a3038"/><rect x="26" y="27" width="3" height="3" fill="#0a3038"/></svg>
<svg class="abs" style="left:746.5px;top:487.0px" width="44" height="14" viewBox="0 0 44 14"><text x="22.2" y="11" text-anchor="middle" font-family="Liberation Mono" font-size="10.6" letter-spacing="-0.36" fill="#000" stroke="#000" stroke-width="2" stroke-linejoin="round">BLOCKS</text><text x="22.2" y="10" text-anchor="middle" font-family="Liberation Mono" font-size="10.6" letter-spacing="-0.36" fill="#000" stroke="#000" stroke-width="2.2" stroke-linejoin="round">BLOCKS</text><text x="22.2" y="10" text-anchor="middle" font-family="Liberation Mono" font-size="10.6" letter-spacing="-0.36" fill="#fff" stroke="#fff" stroke-width=".35">BLOCKS</text></svg>
<svg class="ic" style="left:18px;top:514px" width="32" height="32" viewBox="0 0 32 32"><rect x=".5" y=".5" width="30" height="30" fill="#dcdcdc" stroke="#000"/><path d="M1 1.5H10M1.5 1V10" stroke="#fff" stroke-width="1"/><path d="M1 11.5H10M1.5 11V20" stroke="#fff" stroke-width="1"/><path d="M1 21.5H10M1.5 21V30" stroke="#fff" stroke-width="1"/><path d="M11 1.5H20M11.5 1V10" stroke="#fff" stroke-width="1"/><path d="M11 11.5H20M11.5 11V20" stroke="#fff" stroke-width="1"/><path d="M11 21.5H20M11.5 21V30" stroke="#fff" stroke-width="1"/><path d="M21 1.5H30M21.5 1V10" stroke="#fff" stroke-width="1"/><path d="M21 11.5H30M21.5 11V20" stroke="#fff" stroke-width="1"/><path d="M21 21.5H30M21.5 21V30" stroke="#fff" stroke-width="1"/><path d="M10.5 1V30M20.5 1V30M1 10.5H30M1 20.5H30" stroke="#a4a4a4" stroke-width="1"/><text x="22.6" y="9.0" font-family="Liberation Mono" font-size="10.6" fill="#c01870" stroke="#c01870" stroke-width=".4">8</text><text x="2.6" y="19.0" font-family="Liberation Mono" font-size="10.6" fill="#2040a0" stroke="#2040a0" stroke-width=".4">9</text><text x="12.6" y="19.0" font-family="Liberation Mono" font-size="10.6" fill="#108020" stroke="#108020" stroke-width=".4">7</text><text x="12.6" y="29.0" font-family="Liberation Mono" font-size="10.6" fill="#a01010" stroke="#a01010" stroke-width=".4">2</text></svg>
<svg class="abs" style="left:11.5px;top:555.0px" width="44" height="14" viewBox="0 0 44 14"><text x="22.2" y="11" text-anchor="middle" font-family="Liberation Mono" font-size="10.6" letter-spacing="-0.36" fill="#000" stroke="#000" stroke-width="2" stroke-linejoin="round">SUDOKU</text><text x="22.2" y="10" text-anchor="middle" font-family="Liberation Mono" font-size="10.6" letter-spacing="-0.36" fill="#000" stroke="#000" stroke-width="2.2" stroke-linejoin="round">SUDOKU</text><text x="22.2" y="10" text-anchor="middle" font-family="Liberation Mono" font-size="10.6" letter-spacing="-0.36" fill="#fff" stroke="#fff" stroke-width=".35">SUDOKU</text></svg>
<svg class="ic" style="left:86px;top:514px" width="32" height="32" viewBox="0 0 32 32"><rect x=".5" y=".5" width="30" height="30" fill="#dcdcdc" stroke="#000"/><path d="M1 1.5H10M1.5 1V10" stroke="#fff" stroke-width="1"/><path d="M1 11.5H10M1.5 11V20" stroke="#fff" stroke-width="1"/><path d="M1 21.5H10M1.5 21V30" stroke="#fff" stroke-width="1"/><path d="M11 1.5H20M11.5 1V10" stroke="#fff" stroke-width="1"/><path d="M11 11.5H20M11.5 11V20" stroke="#fff" stroke-width="1"/><path d="M11 21.5H20M11.5 21V30" stroke="#fff" stroke-width="1"/><path d="M21 1.5H30M21.5 1V10" stroke="#fff" stroke-width="1"/><path d="M21 11.5H30M21.5 11V20" stroke="#fff" stroke-width="1"/><path d="M21 21.5H30M21.5 21V30" stroke="#fff" stroke-width="1"/><path d="M10.5 1V30M20.5 1V30M1 10.5H30M1 20.5H30" stroke="#a4a4a4" stroke-width="1"/><circle cx="6" cy="6" r="3.3" stroke="#183898" stroke-width="1.1" fill="none"/><path d="M12.5 2.5l7 7m0 -7l-7 7" stroke="#2a2a2a" stroke-width=".9" fill="none"/><circle cx="26" cy="6" r="3.3" stroke="#183898" stroke-width="1.1" fill="none"/><path d="M2.5 12.5l7 7m0 -7l-7 7" stroke="#2a2a2a" stroke-width=".9" fill="none"/><circle cx="16" cy="16" r="3.3" stroke="#183898" stroke-width="1.1" fill="none"/><circle cx="26" cy="16" r="3.3" stroke="#183898" stroke-width="1.1" fill="none"/><path d="M2.5 22.5l7 7m0 -7l-7 7" stroke="#2a2a2a" stroke-width=".9" fill="none"/><circle cx="16" cy="26" r="3.3" stroke="#183898" stroke-width="1.1" fill="none"/><path d="M22.5 22.5l7 7m0 -7l-7 7" stroke="#2a2a2a" stroke-width=".9" fill="none"/></svg>
<svg class="abs" style="left:79.5px;top:555.0px" width="44" height="14" viewBox="0 0 44 14"><text x="22.2" y="11" text-anchor="middle" font-family="Liberation Mono" font-size="10.6" letter-spacing="-0.36" fill="#000" stroke="#000" stroke-width="2" stroke-linejoin="round">GOMOKU</text><text x="22.2" y="10" text-anchor="middle" font-family="Liberation Mono" font-size="10.6" letter-spacing="-0.36" fill="#000" stroke="#000" stroke-width="2.2" stroke-linejoin="round">GOMOKU</text><text x="22.2" y="10" text-anchor="middle" font-family="Liberation Mono" font-size="10.6" letter-spacing="-0.36" fill="#fff" stroke="#fff" stroke-width=".35">GOMOKU</text></svg>
<svg class="ic" style="left:154px;top:514px" width="32" height="32" viewBox="0 0 32 32"><path d="M7 20L8 15H16L14 20Z" fill="#5a5a5a"/><path d="M19 14L25 14L29 20L28 26L22 28Z" fill="#333"/><path d="M1 22L6 19L14 20L19.5 14.6H23.6L19.6 25L12 28.4H2L.6 25Z" fill="#34d012" stroke="#0c3a06" stroke-width=".6"/><path d="M6 20L14 21L19.6 15" stroke="#7cf050" stroke-width="1" fill="none"/><path d="M23.4 15L21.6 19.4" stroke="#fff" stroke-width="1.2"/><path d="M1 24V30.5H6V28" fill="#222"/><ellipse cx="16.6" cy="27" rx="4" ry="4.2" fill="#111"/><circle cx="16.8" cy="27.4" r="2" fill="#34d012"/><ellipse cx="25.6" cy="25" rx="3.8" ry="4.6" fill="#111"/><circle cx="26" cy="24.8" r="2" fill="#34d012"/></svg>
<svg class="abs" style="left:144.5px;top:555.0px" width="50" height="14" viewBox="0 0 50 14"><text x="25.2" y="11" text-anchor="middle" font-family="Liberation Mono" font-size="10.6" letter-spacing="-0.36" fill="#000" stroke="#000" stroke-width="2" stroke-linejoin="round">KOSILKA</text><text x="25.2" y="10" text-anchor="middle" font-family="Liberation Mono" font-size="10.6" letter-spacing="-0.36" fill="#000" stroke="#000" stroke-width="2.2" stroke-linejoin="round">KOSILKA</text><text x="25.2" y="10" text-anchor="middle" font-family="Liberation Mono" font-size="10.6" letter-spacing="-0.36" fill="#fff" stroke="#fff" stroke-width=".35">KOSILKA</text></svg>
<svg class="ic" style="left:546px;top:514px" width="32" height="32" viewBox="0 0 32 32"><rect x=".5" y=".5" width="31" height="31" fill="#0e3052" stroke="#000"/><rect x="1.5" y="1.5" width="29" height="29" fill="none" stroke="#f0f0f0"/><rect x="3" y="3" width="5" height="5" fill="#44e412"/><path d="M3 3.5h5M3.5 3v5" stroke="#90ff50" stroke-width="1"/><rect x="10" y="3" width="5" height="5" fill="#44e412"/><path d="M10 3.5h5M10.5 3v5" stroke="#90ff50" stroke-width="1"/><rect x="17" y="3" width="5" height="5" fill="#44e412"/><path d="M17 3.5h5M17.5 3v5" stroke="#90ff50" stroke-width="1"/><rect x="24" y="3" width="5" height="5" fill="#44e412"/><path d="M24 3.5h5M24.5 3v5" stroke="#90ff50" stroke-width="1"/><rect x="3" y="10" width="5" height="5" fill="#44e412"/><path d="M3 10.5h5M3.5 10v5" stroke="#90ff50" stroke-width="1"/><rect x="10" y="10" width="5" height="5" fill="#44e412"/><path d="M10 10.5h5M10.5 10v5" stroke="#90ff50" stroke-width="1"/><rect x="17" y="10" width="5" height="5" fill="#44e412"/><path d="M17 10.5h5M17.5 10v5" stroke="#90ff50" stroke-width="1"/><rect x="24" y="10" width="5" height="5" fill="#44e412"/><path d="M24 10.5h5M24.5 10v5" stroke="#90ff50" stroke-width="1"/><rect x="3" y="17" width="5" height="5" fill="#44e412"/><path d="M3 17.5h5M3.5 17v5" stroke="#90ff50" stroke-width="1"/><rect x="10" y="17" width="5" height="5" fill="#a8a0a8"/><path d="M10 17.5h5M10.5 17v5" stroke="#d8d0d8" stroke-width="1"/><rect x="17" y="17" width="5" height="5" fill="#44e412"/><path d="M17 17.5h5M17.5 17v5" stroke="#90ff50" stroke-width="1"/><rect x="24" y="17" width="5" height="5" fill="#44e412"/><path d="M24 17.5h5M24.5 17v5" stroke="#90ff50" stroke-width="1"/><rect x="3" y="24" width="5" height="5" fill="#44e412"/><path d="M3 24.5h5M3.5 24v5" stroke="#90ff50" stroke-width="1"/><rect x="10" y="24" width="5" height="5" fill="#44e412"/><path d="M10 24.5h5M10.5 24v5" stroke="#90ff50" stroke-width="1"/><rect x="17" y="24" width="5" height="5" fill="#44e412"/><path d="M17 24.5h5M17.5 24v5" stroke="#90ff50" stroke-width="1"/><rect x="24" y="24" width="5" height="5" fill="#44e412"/><path d="M24 24.5h5M24.5 24v5" stroke="#90ff50" stroke-width="1"/></svg>
<svg class="abs" style="left:551.5px;top:555.0px" width="20" height="14" viewBox="0 0 20 14"><text x="10.2" y="11" text-anchor="middle" font-family="Liberation Mono" font-size="10.6" letter-spacing="-0.36" fill="#000" stroke="#000" stroke-width="2" stroke-linejoin="round">15</text><text x="10.2" y="10" text-anchor="middle" font-family="Liberation Mono" font-size="10.6" letter-spacing="-0.36" fill="#000" stroke="#000" stroke-width="2.2" stroke-linejoin="round">15</text><text x="10.2" y="10" text-anchor="middle" font-family="Liberation Mono" font-size="10.6" letter-spacing="-0.36" fill="#fff" stroke="#fff" stroke-width=".35">15</text></svg>
<svg class="ic" style="left:614px;top:514px" width="32" height="32" viewBox="0 0 32 32"><rect x="0" y="0" width="32" height="32" fill="#35354e"/><ellipse cx="16" cy="20" rx="14.6" ry="6.4" fill="#8890a8" stroke="#d8d4c0" stroke-width="1.4"/><ellipse cx="16" cy="22.5" rx="9" ry="2.6" fill="#50587a"/><rect x="4" y="17" width="23" height="2.8" fill="#1252c4"/><path d="M5 17.4H26" stroke="#60a0f0" stroke-width=".7"/><ellipse cx="4.2" cy="18.4" rx="1.6" ry="2.4" fill="#f09010"/><ellipse cx="27" cy="18.4" rx="1.4" ry="2.2" fill="#e07010"/><path d="M7 15.4H15" stroke="#f8d060" stroke-width="1.4"/></svg>
<svg class="abs" style="left:613.5px;top:555.0px" width="32" height="14" viewBox="0 0 32 14"><text x="16.2" y="11" text-anchor="middle" font-family="Liberation Mono" font-size="10.6" letter-spacing="-0.36" fill="#000" stroke="#000" stroke-width="2" stroke-linejoin="round">PONG</text><text x="16.2" y="10" text-anchor="middle" font-family="Liberation Mono" font-size="10.6" letter-spacing="-0.36" fill="#000" stroke="#000" stroke-width="2.2" stroke-linejoin="round">PONG</text><text x="16.2" y="10" text-anchor="middle" font-family="Liberation Mono" font-size="10.6" letter-spacing="-0.36" fill="#fff" stroke="#fff" stroke-width=".35">PONG</text></svg>
<svg class="ic" style="left:682px;top:514px" width="32" height="32" viewBox="0 0 32 32"><path d="M0 21.2L2.4 19.2L24 28.4V32H19L3.4 25.6Z" fill="#a8b8f4"/><path d="M1 22.4L22 31.4" stroke="#fff" stroke-width="3" stroke-dasharray="1.4 1"/><path d="M2 24.6L17 31" stroke="#7c8ce8" stroke-width="1" stroke-dasharray="1 1.6"/><path d="M2 15H14L24 21.4V29.4L2.4 19.6Z" fill="#686868"/><path d="M2.4 19.2L23 28.6" stroke="#e81010" stroke-width="1.8"/><path d="M4 16L22 24" stroke="#e8e8e8" stroke-width="1" stroke-dasharray="1 1.4"/><path d="M6 15H10M12 15.4L15 16.4M20 18L24 21" stroke="#f0b030" stroke-width="1.4"/><path d="M14 15H25L30.6 24.4L25 23Z" fill="#f4f4f4"/><path d="M26 15.4L31 23.4" stroke="#c89030" stroke-width="1.2" stroke-dasharray="1 1"/><path d="M24.4 21V31" stroke="#111" stroke-width="1.6"/><path d="M25.4 23.6L31.6 26.4L25.4 31.4Z" fill="#3848b0"/><path d="M25.4 24L31 26.4M25.4 26L29.6 27.8M25.4 28L28 29" stroke="#7888e0" stroke-width=".8" stroke-dasharray="1 1"/></svg>
<svg class="abs" style="left:675.5px;top:555.0px" width="44" height="14" viewBox="0 0 44 14"><text x="22.2" y="11" text-anchor="middle" font-family="Liberation Mono" font-size="10.6" letter-spacing="-0.36" fill="#000" stroke="#000" stroke-width="2" stroke-linejoin="round">SEAWAR</text><text x="22.2" y="10" text-anchor="middle" font-family="Liberation Mono" font-size="10.6" letter-spacing="-0.36" fill="#000" stroke="#000" stroke-width="2.2" stroke-linejoin="round">SEAWAR</text><text x="22.2" y="10" text-anchor="middle" font-family="Liberation Mono" font-size="10.6" letter-spacing="-0.36" fill="#fff" stroke="#fff" stroke-width=".35">SEAWAR</text></svg>
<svg class="ic" style="left:750px;top:514px" width="32" height="32" viewBox="0 0 32 32"><defs><radialGradient id="mn" cx=".42" cy=".34" r=".7"><stop offset="0" stop-color="#ffffff"/><stop offset=".25" stop-color="#b0b0b0"/><stop offset=".6" stop-color="#6c6c6c"/><stop offset="1" stop-color="#2c2c2c"/></radialGradient></defs><circle cx="16.4" cy="16" r="12.6" fill="url(#mn)" stroke="#3a3a3a" stroke-width=".8"/><path d="M27.6 16.0L31.7 16.0" stroke="#2a2a2a" stroke-width="2.8" stroke-linecap="round"/><path d="M27.6 16.0L31.7 16.0" stroke="#e4e4e4" stroke-width="1.3" stroke-linecap="round"/><path d="M24.3 23.9L27.2 26.8" stroke="#2a2a2a" stroke-width="2.8" stroke-linecap="round"/><path d="M24.3 23.9L27.2 26.8" stroke="#e4e4e4" stroke-width="1.3" stroke-linecap="round"/><path d="M16.4 27.2L16.4 31.3" stroke="#2a2a2a" stroke-width="2.8" stroke-linecap="round"/><path d="M16.4 27.2L16.4 31.3" stroke="#e4e4e4" stroke-width="1.3" stroke-linecap="round"/><path d="M8.5 23.9L5.6 26.8" stroke="#2a2a2a" stroke-width="2.8" stroke-linecap="round"/><path d="M8.5 23.9L5.6 26.8" stroke="#e4e4e4" stroke-width="1.3" stroke-linecap="round"/><path d="M5.2 16.0L1.1 16.0" stroke="#2a2a2a" stroke-width="2.8" stroke-linecap="round"/><path d="M5.2 16.0L1.1 16.0" stroke="#e4e4e4" stroke-width="1.3" stroke-linecap="round"/><path d="M8.5 8.1L5.6 5.2" stroke="#2a2a2a" stroke-width="2.8" stroke-linecap="round"/><path d="M8.5 8.1L5.6 5.2" stroke="#e4e4e4" stroke-width="1.3" stroke-linecap="round"/><path d="M16.4 4.8L16.4 0.7" stroke="#2a2a2a" stroke-width="2.8" stroke-linecap="round"/><path d="M16.4 4.8L16.4 0.7" stroke="#e4e4e4" stroke-width="1.3" stroke-linecap="round"/><path d="M24.3 8.1L27.2 5.2" stroke="#2a2a2a" stroke-width="2.8" stroke-linecap="round"/><path d="M24.3 8.1L27.2 5.2" stroke="#e4e4e4" stroke-width="1.3" stroke-linecap="round"/><circle cx="11.2" cy="10.8" r="1.7" fill="#161616"/><circle cx="11.6" cy="10.6" r=".7" fill="#f4f4f4"/><circle cx="21.4" cy="10.8" r="1.7" fill="#161616"/><circle cx="21.8" cy="10.6" r=".7" fill="#f4f4f4"/><circle cx="16.2" cy="16.0" r="1.7" fill="#161616"/><circle cx="16.6" cy="15.8" r=".7" fill="#f4f4f4"/><circle cx="11.2" cy="20.8" r="1.7" fill="#161616"/><circle cx="11.6" cy="20.6" r=".7" fill="#f4f4f4"/><circle cx="21.4" cy="20.8" r="1.7" fill="#161616"/><circle cx="21.8" cy="20.6" r=".7" fill="#f4f4f4"/></svg>
<svg class="abs" style="left:749.5px;top:555.0px" width="32" height="14" viewBox="0 0 32 14"><text x="16.2" y="11" text-anchor="middle" font-family="Liberation Mono" font-size="10.6" letter-spacing="-0.36" fill="#000" stroke="#000" stroke-width="2" stroke-linejoin="round">MINE</text><text x="16.2" y="10" text-anchor="middle" font-family="Liberation Mono" font-size="10.6" letter-spacing="-0.36" fill="#000" stroke="#000" stroke-width="2.2" stroke-linejoin="round">MINE</text><text x="16.2" y="10" text-anchor="middle" font-family="Liberation Mono" font-size="10.6" letter-spacing="-0.36" fill="#fff" stroke="#fff" stroke-width=".35">MINE</text></svg>
<div class="win" style="left:100px;top:100px;width:650px;height:429px">
<div class="tb"></div>
<div class="tbt" style="left:5px;top:5px;color:#303030">Kolibri Far</div>
<div class="btn" style="left:591px;background:linear-gradient(#f2f2f2,#dedede)"><div class="abs" style="left:9px;top:10px;width:8px;height:2px;background:#8c8c8c"></div></div>
<div class="btn" style="left:617px;background:linear-gradient(#c6c6c6,#b2b2b2)"><svg class="abs" style="left:8px;top:4px" width="10" height="10" viewBox="0 0 10 10"><path d="M2 2L8 8M8 2L2 8" stroke="#fff" stroke-width="2"/></svg></div>
<div class="abs" id="kcon" style="left:4px;top:23px;width:640px;height:400px;background:#000080;overflow:hidden">
<div class="ln" style="left:2px;top:6px;width:317px;height:1px"></div>
<div class="ln" style="left:5px;top:8px;width:311px;height:1px"></div>
<div class="ln" style="left:2px;top:6px;width:2px;height:355px"></div>
<div class="ln" style="left:5px;top:8px;width:2px;height:351px"></div>
<div class="ln" style="left:317px;top:6px;width:2px;height:355px"></div>
<div class="ln" style="left:314px;top:8px;width:2px;height:351px"></div>
<div class="ln" style="left:7px;top:328px;width:307px;height:1px"></div>
<div class="ln" style="left:322px;top:6px;width:317px;height:1px"></div>
<div class="ln" style="left:325px;top:8px;width:311px;height:1px"></div>
<div class="ln" style="left:322px;top:6px;width:2px;height:355px"></div>
<div class="ln" style="left:325px;top:8px;width:2px;height:351px"></div>
<div class="ln" style="left:637px;top:6px;width:2px;height:355px"></div>
<div class="ln" style="left:634px;top:8px;width:2px;height:351px"></div>
<div class="ln" style="left:327px;top:328px;width:307px;height:1px"></div>
<div class="ln" style="left:5px;top:358px;width:51px;height:1px"></div>
<div class="ln" style="left:2px;top:360px;width:54px;height:1px"></div>
<div class="ln" style="left:264px;top:358px;width:52px;height:1px"></div>
<div class="ln" style="left:264px;top:360px;width:55px;height:1px"></div>
<div class="ln" style="left:325px;top:358px;width:19px;height:1px"></div>
<div class="ln" style="left:322px;top:360px;width:22px;height:1px"></div>
<div class="ln" style="left:608px;top:358px;width:28px;height:1px"></div>
<div class="ln" style="left:608px;top:360px;width:31px;height:1px"></div>
<div class="abs" style="left:632px;top:48px;width:8px;height:16px;background:#000080"></div>
<div class="abs" style="left:632px;top:240px;width:8px;height:16px;background:#000080"></div>
<div class="abs" style="left:632px;top:272px;width:8px;height:16px;background:#000080"></div>
<div class="abs" style="left:536px;top:288px;width:96px;height:16px;background:#008080"></div>
<div class="con y" style="left:7.4px;top:16px;">и</div>
<div class="con y" style="left:63.4px;top:16px;">Имя</div>
<div class="con w" style="left:7.4px;top:32px;">3D</div>
<div class="con w" style="left:7.4px;top:48px;">DEMOS</div>
<div class="con w" style="left:7.4px;top:64px;">DEVELOP</div>
<div class="con w" style="left:7.4px;top:80px;">DRIVERS</div>
<div class="con w" style="left:7.4px;top:96px;">File Manage</div>
<div class="con w" style="left:7.4px;top:112px;">FONTS</div>
<div class="con w" style="left:7.4px;top:128px;">GAMES</div>
<div class="con w" style="left:7.4px;top:144px;">LIB</div>
<div class="con w" style="left:7.4px;top:160px;">MEDIA</div>
<div class="con w" style="left:7.4px;top:176px;">NETWORK</div>
<div class="con w" style="left:7.4px;top:192px;">SETTINGS</div>
<div class="con g" style="left:7.4px;top:208px;">@DOCKY</div>
<div class="con g" style="left:7.4px;top:224px;">@ICON</div>
<div class="con g" style="left:7.4px;top:240px;">@MENU</div>
<div class="con g" style="left:7.4px;top:256px;">@NOTIFY</div>
<div class="con g" style="left:7.4px;top:272px;">@OPEN</div>
<div class="con g" style="left:7.4px;top:288px;">@SS</div>
<div class="con g" style="left:7.4px;top:304px;">@TASKBAR</div>
<div class="con g" style="left:591.4px;top:48px;">ersio</div>
<div class="con c" style="left:631.4px;top:48px;">}</div>
<div class="con c" style="left:591.4px;top:240px;">on-TL</div>
<div class="con c" style="left:631.4px;top:240px;">}</div>
<div class="con m" style="left:591.4px;top:272px;">ris-2</div>
<div class="con c" style="left:631.4px;top:272px;">}</div>
<div class="con c" style="left:7.4px;top:336px;">3D</div>
<div class="con c" style="left:151.4px;top:336px;">Папка 26.02.16 21:00</div>
<div class="con c" style="left:327.4px;top:336px;">MEFORTH</div>
<div class="con c" style="left:471.4px;top:336px;">25340 17.02.14 12:56</div>
<div class="con c" style="left:63.4px;top:352px;">507,632 байт в 74 файлах</div>
<div class="con c" style="left:351.4px;top:352px;">3,385,297,729 байт в 333 файлах</div>
<div class="abs" style="left:0;top:368px;width:640px;height:32px;background:#000"></div>
<div class="con s" style="left:-0.6px;top:368px;">/rd/1&gt;</div>
<div class="con s" style="left:-0.6px;top:384px;">1</div>
<div class="abs" style="left:8px;top:384px;width:48px;height:16px;background:#008080"></div>
<div class="con k" style="left:7.4px;top:384px;">Помощь</div>
<div class="con s" style="left:63.4px;top:384px;">2</div>
<div class="abs" style="left:72px;top:384px;width:48px;height:16px;background:#008080"></div>
<div class="con k" style="left:71.4px;top:384px;">ПользМ</div>
<div class="con s" style="left:127.4px;top:384px;">3</div>
<div class="abs" style="left:136px;top:384px;width:48px;height:16px;background:#008080"></div>
<div class="con k" style="left:135.4px;top:384px;">Просм </div>
<div class="con s" style="left:191.4px;top:384px;">4</div>
<div class="abs" style="left:200px;top:384px;width:48px;height:16px;background:#008080"></div>
<div class="con k" style="left:199.4px;top:384px;">Редакт</div>
<div class="con s" style="left:255.4px;top:384px;">5</div>
<div class="abs" style="left:264px;top:384px;width:48px;height:16px;background:#008080"></div>
<div class="con k" style="left:263.4px;top:384px;">Копир </div>
<div class="con s" style="left:319.4px;top:384px;">6</div>
<div class="abs" style="left:328px;top:384px;width:48px;height:16px;background:#008080"></div>
<div class="con k" style="left:327.4px;top:384px;">Перен </div>
<div class="con s" style="left:383.4px;top:384px;">7</div>
<div class="abs" style="left:392px;top:384px;width:48px;height:16px;background:#008080"></div>
<div class="con k" style="left:391.4px;top:384px;">Папка </div>
<div class="con s" style="left:447.4px;top:384px;">8</div>
<div class="abs" style="left:456px;top:384px;width:48px;height:16px;background:#008080"></div>
<div class="con k" style="left:455.4px;top:384px;">Удален</div>
<div class="con s" style="left:511.4px;top:384px;">9</div>
<div class="abs" style="left:520px;top:384px;width:48px;height:16px;background:#008080"></div>
<div class="con k" style="left:519.4px;top:384px;">КонфМн</div>
<div class="con s" style="left:575.4px;top:384px;">10</div>
<div class="abs" style="left:592px;top:384px;width:48px;height:16px;background:#008080"></div>
<div class="con k" style="left:591.4px;top:384px;">Выход</div>
</div>
</div>
<div class="win" style="left:200px;top:100px;width:501px;height:353px">
<div class="tb tba"></div>
<div class="tbt" style="left:7px;top:8px;color:#d4e2ff">Форт для MenuetOS (SPF)</div>
<div class="btn" style="left:442px;background:linear-gradient(#f4f4f4,#e0e0e0)"><div class="abs" style="left:9px;top:10px;width:8px;height:2px;background:#3a3a3a"></div></div>
<div class="btn" style="left:468px;background:linear-gradient(#f2a0aa,#e87c8a)"><svg class="abs" style="left:8px;top:4px" width="10" height="10" viewBox="0 0 10 10"><path d="M2 2L8 8M8 2L2 8" stroke="#fff" stroke-width="2"/></svg></div>
<div class="abs" id="mcon" style="left:4px;top:23px;width:491px;height:324px;background:#000;overflow:hidden">
<svg class="abs" style="left:0;top:0" width="491" height="324" viewBox="0 0 491 324" shape-rendering="crispEdges">
<path fill="#fff" d="M85 76h1v1h-1zM86 77h1v1h-1zM87 78h1v1h-1zM88 79h1v1h-1zM89 80h2v1h-2zM91 81h1v1h-1zM92 82h1v1h-1zM93 83h1v1h-1zM94 84h1v1h-1zM95 85h1v1h-1zM96 86h1v1h-1zM97 87h1v1h-1zM98 88h2v1h-2zM100 89h1v1h-1zM101 90h1v1h-1zM102 91h1v1h-1zM103 92h1v1h-1zM104 93h1v1h-1zM105 94h1v1h-1zM106 95h1v1h-1zM107 96h1v1h-1zM108 97h2v1h-2zM110 98h1v1h-1zM111 99h1v1h-1zM112 100h1v1h-1zM113 101h1v1h-1zM114 102h1v1h-1zM115 103h1v1h-1zM116 104h1v1h-1zM117 105h2v1h-2zM119 106h1v1h-1zM120 107h1v1h-1zM121 108h1v1h-1zM122 109h1v1h-1zM123 110h1v1h-1zM124 111h1v1h-1zM125 112h1v1h-1zM126 113h2v1h-2zM128 114h1v1h-1zM129 115h1v1h-1zM130 116h1v1h-1zM131 117h1v1h-1zM132 118h1v1h-1zM133 119h1v1h-1zM134 120h1v1h-1zM135 121h1v1h-1zM136 122h2v1h-2zM138 123h1v1h-1zM139 124h1v1h-1zM140 125h1v1h-1zM141 126h1v1h-1zM142 127h1v1h-1zM143 128h1v1h-1zM144 129h1v1h-1zM145 130h2v1h-2zM147 131h1v1h-1zM148 132h1v1h-1zM149 133h1v1h-1zM150 134h1v1h-1zM151 135h1v1h-1zM152 136h1v1h-1zM153 137h1v1h-1zM154 138h2v1h-2zM156 139h1v1h-1zM157 140h1v1h-1zM158 141h1v1h-1zM159 142h1v1h-1zM160 143h1v1h-1zM161 144h1v1h-1zM162 145h1v1h-1zM163 146h1v1h-1zM164 147h2v1h-2zM166 148h1v1h-1zM167 149h1v1h-1zM168 150h1v1h-1zM169 151h1v1h-1zM170 152h1v1h-1zM171 153h1v1h-1zM172 154h1v1h-1zM173 155h2v1h-2zM175 156h1v1h-1zM176 157h1v1h-1zM177 158h1v1h-1zM178 159h1v1h-1zM179 160h1v1h-1zM180 161h1v1h-1zM181 162h1v1h-1zM182 163h2v1h-2zM184 164h1v1h-1zM185 165h1v1h-1zM186 166h1v1h-1zM187 167h1v1h-1zM188 168h1v1h-1zM189 169h1v1h-1zM190 170h1v1h-1zM191 171h1v1h-1zM192 172h2v1h-2zM100 76v1h1v-1zM101 77v1h1v-1zM102 78v1h1v-1zM103 79v1h1v-1zM104 80v1h1v-1zM105 81v1h1v-1zM106 82v1h1v-1zM107 83v1h1v-1zM108 84v1h1v-1zM109 85v1h1v-1zM110 86v1h1v-1zM111 87v1h1v-1zM112 88v1h1v-1zM113 89v1h1v-1zM114 90v1h1v-1zM115 91v1h1v-1zM116 92v2h1v-2zM117 94v1h1v-1zM118 95v1h1v-1zM119 96v1h1v-1zM120 97v1h1v-1zM121 98v1h1v-1zM122 99v1h1v-1zM123 100v1h1v-1zM124 101v1h1v-1zM125 102v1h1v-1zM126 103v1h1v-1zM127 104v1h1v-1zM128 105v1h1v-1zM129 106v1h1v-1zM130 107v1h1v-1zM131 108v1h1v-1zM132 109v1h1v-1zM133 110v1h1v-1zM134 111v1h1v-1zM135 112v1h1v-1zM136 113v1h1v-1zM137 114v1h1v-1zM138 115v1h1v-1zM139 116v1h1v-1zM140 117v1h1v-1zM141 118v1h1v-1zM142 119v1h1v-1zM143 120v1h1v-1zM144 121v1h1v-1zM145 122v1h1v-1zM146 123v1h1v-1zM147 124v1h1v-1zM148 125v2h1v-2zM149 127v1h1v-1zM150 128v1h1v-1zM151 129v1h1v-1zM152 130v1h1v-1zM153 131v1h1v-1zM154 132v1h1v-1zM155 133v1h1v-1zM156 134v1h1v-1zM157 135v1h1v-1zM158 136v1h1v-1zM159 137v1h1v-1zM160 138v1h1v-1zM161 139v1h1v-1zM162 140v1h1v-1zM163 141v1h1v-1zM164 142v1h1v-1zM165 143v1h1v-1zM166 144v1h1v-1zM167 145v1h1v-1zM168 146v1h1v-1zM169 147v1h1v-1zM170 148v1h1v-1zM171 149v1h1v-1zM172 150v1h1v-1zM173 151v1h1v-1zM174 152v1h1v-1zM175 153v1h1v-1zM176 154v1h1v-1zM177 155v1h1v-1zM178 156v1h1v-1zM179 157v1h1v-1zM180 158v1h1v-1zM181 159v2h1v-2zM182 161v1h1v-1zM183 162v1h1v-1zM184 163v1h1v-1zM185 164v1h1v-1zM186 165v1h1v-1zM187 166v1h1v-1zM188 167v1h1v-1zM189 168v1h1v-1zM190 169v1h1v-1zM191 170v1h1v-1zM192 171v1h1v-1zM193 172v1h1v-1zM115 76v1h1v-1zM116 77v1h1v-1zM117 78v2h1v-2zM118 80v1h1v-1zM119 81v1h1v-1zM120 82v1h1v-1zM121 83v1h1v-1zM122 84v2h1v-2zM123 86v1h1v-1zM124 87v1h1v-1zM125 88v1h1v-1zM126 89v2h1v-2zM127 91v1h1v-1zM128 92v1h1v-1zM129 93v1h1v-1zM130 94v1h1v-1zM131 95v2h1v-2zM132 97v1h1v-1zM133 98v1h1v-1zM134 99v1h1v-1zM135 100v2h1v-2zM136 102v1h1v-1zM137 103v1h1v-1zM138 104v1h1v-1zM139 105v1h1v-1zM140 106v2h1v-2zM141 108v1h1v-1zM142 109v1h1v-1zM143 110v1h1v-1zM144 111v1h1v-1zM145 112v2h1v-2zM146 114v1h1v-1zM147 115v1h1v-1zM148 116v1h1v-1zM149 117v2h1v-2zM150 119v1h1v-1zM151 120v1h1v-1zM152 121v1h1v-1zM153 122v1h1v-1zM154 123v2h1v-2zM155 125v1h1v-1zM156 126v1h1v-1zM157 127v1h1v-1zM158 128v2h1v-2zM159 130v1h1v-1zM160 131v1h1v-1zM161 132v1h1v-1zM162 133v1h1v-1zM163 134v2h1v-2zM164 136v1h1v-1zM165 137v1h1v-1zM166 138v1h1v-1zM167 139v2h1v-2zM168 141v1h1v-1zM169 142v1h1v-1zM170 143v1h1v-1zM171 144v1h1v-1zM172 145v2h1v-2zM173 147v1h1v-1zM174 148v1h1v-1zM175 149v1h1v-1zM176 150v2h1v-2zM177 152v1h1v-1zM178 153v1h1v-1zM179 154v1h1v-1zM180 155v1h1v-1zM181 156v2h1v-2zM182 158v1h1v-1zM183 159v1h1v-1zM184 160v1h1v-1zM185 161v1h1v-1zM186 162v2h1v-2zM187 164v1h1v-1zM188 165v1h1v-1zM189 166v1h1v-1zM190 167v2h1v-2zM191 169v1h1v-1zM192 170v1h1v-1zM193 171v1h1v-1zM130 76v1h1v-1zM131 77v2h1v-2zM132 79v1h1v-1zM133 80v2h1v-2zM134 82v1h1v-1zM135 83v2h1v-2zM136 85v1h1v-1zM137 86v2h1v-2zM138 88v1h1v-1zM139 89v2h1v-2zM140 91v1h1v-1zM141 92v2h1v-2zM142 94v1h1v-1zM143 95v2h1v-2zM144 97v1h1v-1zM145 98v2h1v-2zM146 100v1h1v-1zM147 101v2h1v-2zM148 103v1h1v-1zM149 104v2h1v-2zM150 106v1h1v-1zM151 107v2h1v-2zM152 109v1h1v-1zM153 110v2h1v-2zM154 112v1h1v-1zM155 113v2h1v-2zM156 115v1h1v-1zM157 116v2h1v-2zM158 118v1h1v-1zM159 119v2h1v-2zM160 121v1h1v-1zM161 122v2h1v-2zM162 124v1h1v-1zM163 125v2h1v-2zM164 127v1h1v-1zM165 128v1h1v-1zM166 129v2h1v-2zM167 131v1h1v-1zM168 132v2h1v-2zM169 134v1h1v-1zM170 135v2h1v-2zM171 137v1h1v-1zM172 138v2h1v-2zM173 140v1h1v-1zM174 141v2h1v-2zM175 143v1h1v-1zM176 144v2h1v-2zM177 146v1h1v-1zM178 147v2h1v-2zM179 149v1h1v-1zM180 150v2h1v-2zM181 152v1h1v-1zM182 153v2h1v-2zM183 155v1h1v-1zM184 156v2h1v-2zM185 158v1h1v-1zM186 159v2h1v-2zM187 161v1h1v-1zM188 162v2h1v-2zM189 164v1h1v-1zM190 165v2h1v-2zM191 167v1h1v-1zM192 168v2h1v-2zM193 170v1h1v-1zM194 171v1h1v-1zM175 76v3h1v-3zM176 79v4h1v-4zM177 83v5h1v-5zM178 88v4h1v-4zM179 92v5h1v-5zM180 97v5h1v-5zM181 102v4h1v-4zM182 106v5h1v-5zM183 111v4h1v-4zM184 115v5h1v-5zM185 120v4h1v-4zM186 124v5h1v-5zM187 129v4h1v-4zM188 133v5h1v-5zM189 138v4h1v-4zM190 142v5h1v-5zM191 147v5h1v-5zM192 152v4h1v-4zM193 156v5h1v-5zM194 161v4h1v-4zM195 165v5h1v-5zM196 170v2h1v-2zM190 76v8h1v-8zM191 84v14h1v-14zM192 98v14h1v-14zM193 112v15h1v-15zM194 127v14h1v-14zM195 141v14h1v-14zM196 155v14h1v-14zM197 169v3h1v-3zM205 76v7h1v-7zM204 83v12h1v-12zM203 95v13h1v-13zM202 108v12h1v-12zM201 120v13h1v-13zM200 133v12h1v-12zM199 145v13h1v-13zM198 158v12h1v-12zM197 170v2h1v-2zM220 76v3h1v-3zM219 79v4h1v-4zM218 83v4h1v-4zM217 87v5h1v-5zM216 92v4h1v-4zM215 96v4h1v-4zM214 100v5h1v-5zM213 105v4h1v-4zM212 109v4h1v-4zM211 113v5h1v-5zM210 118v4h1v-4zM209 122v5h1v-5zM208 127v4h1v-4zM207 131v4h1v-4zM206 135v5h1v-5zM205 140v4h1v-4zM204 144v4h1v-4zM203 148v5h1v-5zM202 153v4h1v-4zM201 157v4h1v-4zM200 161v5h1v-5zM199 166v4h1v-4zM198 170v2h1v-2zM235 76v2h1v-2zM234 78v2h1v-2zM233 80v3h1v-3zM232 83v3h1v-3zM231 86v2h1v-2zM230 88v3h1v-3zM229 91v3h1v-3zM228 94v2h1v-2zM227 96v3h1v-3zM226 99v3h1v-3zM225 102v2h1v-2zM224 104v3h1v-3zM223 107v2h1v-2zM222 109v3h1v-3zM221 112v3h1v-3zM220 115v2h1v-2zM219 117v3h1v-3zM218 120v3h1v-3zM217 123v2h1v-2zM216 125v3h1v-3zM215 128v2h1v-2zM214 130v3h1v-3zM213 133v3h1v-3zM212 136v2h1v-2zM211 138v3h1v-3zM210 141v3h1v-3zM209 144v2h1v-2zM208 146v3h1v-3zM207 149v3h1v-3zM206 152v2h1v-2zM205 154v3h1v-3zM204 157v2h1v-2zM203 159v3h1v-3zM202 162v3h1v-3zM201 165v2h1v-2zM200 167v3h1v-3zM199 170v2h1v-2zM250 76v1h1v-1zM249 77v2h1v-2zM248 79v2h1v-2zM247 81v2h1v-2zM246 83v2h1v-2zM245 85v2h1v-2zM244 87v2h1v-2zM243 89v2h1v-2zM242 91v2h1v-2zM241 93v1h1v-1zM240 94v2h1v-2zM239 96v2h1v-2zM238 98v2h1v-2zM237 100v2h1v-2zM236 102v2h1v-2zM235 104v2h1v-2zM234 106v2h1v-2zM233 108v2h1v-2zM232 110v1h1v-1zM231 111v2h1v-2zM230 113v2h1v-2zM229 115v2h1v-2zM228 117v2h1v-2zM227 119v2h1v-2zM226 121v2h1v-2zM225 123v2h1v-2zM224 125v2h1v-2zM223 127v1h1v-1zM222 128v2h1v-2zM221 130v2h1v-2zM220 132v2h1v-2zM219 134v2h1v-2zM218 136v2h1v-2zM217 138v2h1v-2zM216 140v2h1v-2zM215 142v1h1v-1zM214 143v2h1v-2zM213 145v2h1v-2zM212 147v2h1v-2zM211 149v2h1v-2zM210 151v2h1v-2zM209 153v2h1v-2zM208 155v2h1v-2zM207 157v2h1v-2zM206 159v1h1v-1zM205 160v2h1v-2zM204 162v2h1v-2zM203 164v2h1v-2zM202 166v2h1v-2zM201 168v2h1v-2zM200 170v2h1v-2zM265 76v1h1v-1zM264 77v2h1v-2zM263 79v1h1v-1zM262 80v2h1v-2zM261 82v1h1v-1zM260 83v2h1v-2zM259 85v1h1v-1zM258 86v2h1v-2zM257 88v1h1v-1zM256 89v1h1v-1zM255 90v2h1v-2zM254 92v1h1v-1zM253 93v2h1v-2zM252 95v1h1v-1zM251 96v2h1v-2zM250 98v1h1v-1zM249 99v2h1v-2zM248 101v1h1v-1zM247 102v2h1v-2zM246 104v1h1v-1zM245 105v2h1v-2zM244 107v1h1v-1zM243 108v2h1v-2zM242 110v1h1v-1zM241 111v2h1v-2zM240 113v1h1v-1zM239 114v1h1v-1zM238 115v2h1v-2zM237 117v1h1v-1zM236 118v2h1v-2zM235 120v1h1v-1zM234 121v2h1v-2zM233 123v1h1v-1zM232 124v2h1v-2zM231 126v1h1v-1zM230 127v2h1v-2zM229 129v1h1v-1zM228 130v2h1v-2zM227 132v1h1v-1zM226 133v2h1v-2zM225 135v1h1v-1zM224 136v2h1v-2zM223 138v1h1v-1zM222 139v1h1v-1zM221 140v2h1v-2zM220 142v1h1v-1zM219 143v2h1v-2zM218 145v1h1v-1zM217 146v2h1v-2zM216 148v1h1v-1zM215 149v2h1v-2zM214 151v1h1v-1zM213 152v2h1v-2zM212 154v1h1v-1zM211 155v2h1v-2zM210 157v1h1v-1zM209 158v2h1v-2zM208 160v1h1v-1zM207 161v2h1v-2zM206 163v1h1v-1zM205 164v1h1v-1zM204 165v2h1v-2zM203 167v1h1v-1zM202 168v2h1v-2zM201 170v1h1v-1zM200 171v1h1v-1zM295 76v1h1v-1zM294 77v1h1v-1zM293 78v1h1v-1zM292 79v1h1v-1zM291 80v1h1v-1zM290 81v1h1v-1zM289 82v1h1v-1zM288 83v1h1v-1zM287 84v1h1v-1zM286 85v1h1v-1zM285 86v1h1v-1zM284 87v1h1v-1zM283 88v1h1v-1zM282 89v1h1v-1zM281 90v1h1v-1zM280 91v1h1v-1zM279 92v1h1v-1zM278 93v1h1v-1zM277 94v1h1v-1zM276 95v1h1v-1zM275 96v1h1v-1zM274 97v1h1v-1zM273 98v1h1v-1zM272 99v1h1v-1zM271 100v2h1v-2zM270 102v1h1v-1zM269 103v1h1v-1zM268 104v1h1v-1zM267 105v1h1v-1zM266 106v1h1v-1zM265 107v1h1v-1zM264 108v1h1v-1zM263 109v1h1v-1zM262 110v1h1v-1zM261 111v1h1v-1zM260 112v1h1v-1zM259 113v1h1v-1zM258 114v1h1v-1zM257 115v1h1v-1zM256 116v1h1v-1zM255 117v1h1v-1zM254 118v1h1v-1zM253 119v1h1v-1zM252 120v1h1v-1zM251 121v1h1v-1zM250 122v1h1v-1zM249 123v1h1v-1zM248 124v1h1v-1zM247 125v1h1v-1zM246 126v1h1v-1zM245 127v1h1v-1zM244 128v1h1v-1zM243 129v1h1v-1zM242 130v1h1v-1zM241 131v1h1v-1zM240 132v1h1v-1zM239 133v1h1v-1zM238 134v1h1v-1zM237 135v1h1v-1zM236 136v1h1v-1zM235 137v1h1v-1zM234 138v1h1v-1zM233 139v1h1v-1zM232 140v1h1v-1zM231 141v1h1v-1zM230 142v1h1v-1zM229 143v1h1v-1zM228 144v1h1v-1zM227 145v1h1v-1zM226 146v1h1v-1zM225 147v1h1v-1zM224 148v1h1v-1zM223 149v1h1v-1zM222 150v2h1v-2zM221 152v1h1v-1zM220 153v1h1v-1zM219 154v1h1v-1zM218 155v1h1v-1zM217 156v1h1v-1zM216 157v1h1v-1zM215 158v1h1v-1zM214 159v1h1v-1zM213 160v1h1v-1zM212 161v1h1v-1zM211 162v1h1v-1zM210 163v1h1v-1zM209 164v1h1v-1zM208 165v1h1v-1zM207 166v1h1v-1zM206 167v1h1v-1zM205 168v1h1v-1zM204 169v1h1v-1zM203 170v1h1v-1zM202 171v1h1v-1zM201 172v1h1v-1zM85 276h1v1h-1zM86 275h1v1h-1zM87 274h1v1h-1zM88 273h1v1h-1zM89 272h2v1h-2zM91 271h1v1h-1zM92 270h1v1h-1zM93 269h1v1h-1zM94 268h1v1h-1zM95 267h1v1h-1zM96 266h1v1h-1zM97 265h1v1h-1zM98 264h2v1h-2zM100 263h1v1h-1zM101 262h1v1h-1zM102 261h1v1h-1zM103 260h1v1h-1zM104 259h1v1h-1zM105 258h1v1h-1zM106 257h1v1h-1zM107 256h1v1h-1zM108 255h2v1h-2zM110 254h1v1h-1zM111 253h1v1h-1zM112 252h1v1h-1zM113 251h1v1h-1zM114 250h1v1h-1zM115 249h1v1h-1zM116 248h1v1h-1zM117 247h2v1h-2zM119 246h1v1h-1zM120 245h1v1h-1zM121 244h1v1h-1zM122 243h1v1h-1zM123 242h1v1h-1zM124 241h1v1h-1zM125 240h1v1h-1zM126 239h2v1h-2zM128 238h1v1h-1zM129 237h1v1h-1zM130 236h1v1h-1zM131 235h1v1h-1zM132 234h1v1h-1zM133 233h1v1h-1zM134 232h1v1h-1zM135 231h1v1h-1zM136 230h2v1h-2zM138 229h1v1h-1zM139 228h1v1h-1zM140 227h1v1h-1zM141 226h1v1h-1zM142 225h1v1h-1zM143 224h1v1h-1zM144 223h1v1h-1zM145 222h2v1h-2zM147 221h1v1h-1zM148 220h1v1h-1zM149 219h1v1h-1zM150 218h1v1h-1zM151 217h1v1h-1zM152 216h1v1h-1zM153 215h1v1h-1zM154 214h2v1h-2zM156 213h1v1h-1zM157 212h1v1h-1zM158 211h1v1h-1zM159 210h1v1h-1zM160 209h1v1h-1zM161 208h1v1h-1zM162 207h1v1h-1zM163 206h1v1h-1zM164 205h2v1h-2zM166 204h1v1h-1zM167 203h1v1h-1zM168 202h1v1h-1zM169 201h1v1h-1zM170 200h1v1h-1zM171 199h1v1h-1zM172 198h1v1h-1zM173 197h2v1h-2zM175 196h1v1h-1zM176 195h1v1h-1zM177 194h1v1h-1zM178 193h1v1h-1zM179 192h1v1h-1zM180 191h1v1h-1zM181 190h1v1h-1zM182 189h2v1h-2zM184 188h1v1h-1zM185 187h1v1h-1zM186 186h1v1h-1zM187 185h1v1h-1zM188 184h1v1h-1zM189 183h1v1h-1zM190 182h1v1h-1zM191 181h1v1h-1zM192 180h2v1h-2zM100 276v1h1v-1zM101 275v1h1v-1zM102 274v1h1v-1zM103 273v1h1v-1zM104 272v1h1v-1zM105 271v1h1v-1zM106 270v1h1v-1zM107 269v1h1v-1zM108 268v1h1v-1zM109 267v1h1v-1zM110 266v1h1v-1zM111 265v1h1v-1zM112 264v1h1v-1zM113 263v1h1v-1zM114 262v1h1v-1zM115 261v1h1v-1zM116 259v2h1v-2zM117 258v1h1v-1zM118 257v1h1v-1zM119 256v1h1v-1zM120 255v1h1v-1zM121 254v1h1v-1zM122 253v1h1v-1zM123 252v1h1v-1zM124 251v1h1v-1zM125 250v1h1v-1zM126 249v1h1v-1zM127 248v1h1v-1zM128 247v1h1v-1zM129 246v1h1v-1zM130 245v1h1v-1zM131 244v1h1v-1zM132 243v1h1v-1zM133 242v1h1v-1zM134 241v1h1v-1zM135 240v1h1v-1zM136 239v1h1v-1zM137 238v1h1v-1zM138 237v1h1v-1zM139 236v1h1v-1zM140 235v1h1v-1zM141 234v1h1v-1zM142 233v1h1v-1zM143 232v1h1v-1zM144 231v1h1v-1zM145 230v1h1v-1zM146 229v1h1v-1zM147 228v1h1v-1zM148 226v2h1v-2zM149 225v1h1v-1zM150 224v1h1v-1zM151 223v1h1v-1zM152 222v1h1v-1zM153 221v1h1v-1zM154 220v1h1v-1zM155 219v1h1v-1zM156 218v1h1v-1zM157 217v1h1v-1zM158 216v1h1v-1zM159 215v1h1v-1zM160 214v1h1v-1zM161 213v1h1v-1zM162 212v1h1v-1zM163 211v1h1v-1zM164 210v1h1v-1zM165 209v1h1v-1zM166 208v1h1v-1zM167 207v1h1v-1zM168 206v1h1v-1zM169 205v1h1v-1zM170 204v1h1v-1zM171 203v1h1v-1zM172 202v1h1v-1zM173 201v1h1v-1zM174 200v1h1v-1zM175 199v1h1v-1zM176 198v1h1v-1zM177 197v1h1v-1zM178 196v1h1v-1zM179 195v1h1v-1zM180 194v1h1v-1zM181 192v2h1v-2zM182 191v1h1v-1zM183 190v1h1v-1zM184 189v1h1v-1zM185 188v1h1v-1zM186 187v1h1v-1zM187 186v1h1v-1zM188 185v1h1v-1zM189 184v1h1v-1zM190 183v1h1v-1zM191 182v1h1v-1zM192 181v1h1v-1zM193 180v1h1v-1zM115 276v1h1v-1zM116 275v1h1v-1zM117 273v2h1v-2zM118 272v1h1v-1zM119 271v1h1v-1zM120 270v1h1v-1zM121 269v1h1v-1zM122 267v2h1v-2zM123 266v1h1v-1zM124 265v1h1v-1zM125 264v1h1v-1zM126 262v2h1v-2zM127 261v1h1v-1zM128 260v1h1v-1zM129 259v1h1v-1zM130 258v1h1v-1zM131 256v2h1v-2zM132 255v1h1v-1zM133 254v1h1v-1zM134 253v1h1v-1zM135 251v2h1v-2zM136 250v1h1v-1zM137 249v1h1v-1zM138 248v1h1v-1zM139 247v1h1v-1zM140 245v2h1v-2zM141 244v1h1v-1zM142 243v1h1v-1zM143 242v1h1v-1zM144 241v1h1v-1zM145 239v2h1v-2zM146 238v1h1v-1zM147 237v1h1v-1zM148 236v1h1v-1zM149 234v2h1v-2zM150 233v1h1v-1zM151 232v1h1v-1zM152 231v1h1v-1zM153 230v1h1v-1zM154 228v2h1v-2zM155 227v1h1v-1zM156 226v1h1v-1zM157 225v1h1v-1zM158 223v2h1v-2zM159 222v1h1v-1zM160 221v1h1v-1zM161 220v1h1v-1zM162 219v1h1v-1zM163 217v2h1v-2zM164 216v1h1v-1zM165 215v1h1v-1zM166 214v1h1v-1zM167 212v2h1v-2zM168 211v1h1v-1zM169 210v1h1v-1zM170 209v1h1v-1zM171 208v1h1v-1zM172 206v2h1v-2zM173 205v1h1v-1zM174 204v1h1v-1zM175 203v1h1v-1zM176 201v2h1v-2zM177 200v1h1v-1zM178 199v1h1v-1zM179 198v1h1v-1zM180 197v1h1v-1zM181 195v2h1v-2zM182 194v1h1v-1zM183 193v1h1v-1zM184 192v1h1v-1zM185 191v1h1v-1zM186 189v2h1v-2zM187 188v1h1v-1zM188 187v1h1v-1zM189 186v1h1v-1zM190 184v2h1v-2zM191 183v1h1v-1zM192 182v1h1v-1zM193 181v1h1v-1zM130 276v1h1v-1zM131 274v2h1v-2zM132 273v1h1v-1zM133 271v2h1v-2zM134 270v1h1v-1zM135 268v2h1v-2zM136 267v1h1v-1zM137 265v2h1v-2zM138 264v1h1v-1zM139 262v2h1v-2zM140 261v1h1v-1zM141 259v2h1v-2zM142 258v1h1v-1zM143 256v2h1v-2zM144 255v1h1v-1zM145 253v2h1v-2zM146 252v1h1v-1zM147 250v2h1v-2zM148 249v1h1v-1zM149 247v2h1v-2zM150 246v1h1v-1zM151 244v2h1v-2zM152 243v1h1v-1zM153 241v2h1v-2zM154 240v1h1v-1zM155 238v2h1v-2zM156 237v1h1v-1zM157 235v2h1v-2zM158 234v1h1v-1zM159 232v2h1v-2zM160 231v1h1v-1zM161 229v2h1v-2zM162 228v1h1v-1zM163 226v2h1v-2zM164 225v1h1v-1zM165 224v1h1v-1zM166 222v2h1v-2zM167 221v1h1v-1zM168 219v2h1v-2zM169 218v1h1v-1zM170 216v2h1v-2zM171 215v1h1v-1zM172 213v2h1v-2zM173 212v1h1v-1zM174 210v2h1v-2zM175 209v1h1v-1zM176 207v2h1v-2zM177 206v1h1v-1zM178 204v2h1v-2zM179 203v1h1v-1zM180 201v2h1v-2zM181 200v1h1v-1zM182 198v2h1v-2zM183 197v1h1v-1zM184 195v2h1v-2zM185 194v1h1v-1zM186 192v2h1v-2zM187 191v1h1v-1zM188 189v2h1v-2zM189 188v1h1v-1zM190 186v2h1v-2zM191 185v1h1v-1zM192 183v2h1v-2zM193 182v1h1v-1zM194 181v1h1v-1zM145 276v1h1v-1zM146 274v2h1v-2zM147 272v2h1v-2zM148 270v2h1v-2zM149 268v2h1v-2zM150 266v2h1v-2zM151 264v2h1v-2zM152 262v2h1v-2zM153 260v2h1v-2zM154 258v2h1v-2zM155 256v2h1v-2zM156 254v2h1v-2zM157 252v2h1v-2zM158 251v1h1v-1zM159 249v2h1v-2zM160 247v2h1v-2zM161 245v2h1v-2zM162 243v2h1v-2zM163 241v2h1v-2zM164 239v2h1v-2zM165 237v2h1v-2zM166 235v2h1v-2zM167 233v2h1v-2zM168 231v2h1v-2zM169 229v2h1v-2zM170 227v2h1v-2zM171 226v1h1v-1zM172 224v2h1v-2zM173 222v2h1v-2zM174 220v2h1v-2zM175 218v2h1v-2zM176 216v2h1v-2zM177 214v2h1v-2zM178 212v2h1v-2zM179 210v2h1v-2zM180 208v2h1v-2zM181 206v2h1v-2zM182 204v2h1v-2zM183 202v2h1v-2zM184 201v1h1v-1zM185 199v2h1v-2zM186 197v2h1v-2zM187 195v2h1v-2zM188 193v2h1v-2zM189 191v2h1v-2zM190 189v2h1v-2zM191 187v2h1v-2zM192 185v2h1v-2zM193 183v2h1v-2zM194 181v2h1v-2zM160 275v2h1v-2zM161 272v3h1v-3zM162 270v2h1v-2zM163 267v3h1v-3zM164 264v3h1v-3zM165 262v2h1v-2zM166 259v3h1v-3zM167 256v3h1v-3zM168 254v2h1v-2zM169 251v3h1v-3zM170 248v3h1v-3zM171 245v3h1v-3zM172 243v2h1v-2zM173 240v3h1v-3zM174 237v3h1v-3zM175 235v2h1v-2zM176 232v3h1v-3zM177 229v3h1v-3zM178 226v3h1v-3zM179 224v2h1v-2zM180 221v3h1v-3zM181 218v3h1v-3zM182 216v2h1v-2zM183 213v3h1v-3zM184 210v3h1v-3zM185 208v2h1v-2zM186 205v3h1v-3zM187 202v3h1v-3zM188 199v3h1v-3zM189 197v2h1v-2zM190 194v3h1v-3zM191 191v3h1v-3zM192 189v2h1v-2zM193 186v3h1v-3zM194 183v3h1v-3zM195 181v2h1v-2zM190 269v8h1v-8zM191 255v14h1v-14zM192 241v14h1v-14zM193 226v15h1v-15zM194 212v14h1v-14zM195 198v14h1v-14zM196 184v14h1v-14zM197 181v3h1v-3zM220 274v3h1v-3zM219 270v4h1v-4zM218 266v4h1v-4zM217 261v5h1v-5zM216 257v4h1v-4zM215 253v4h1v-4zM214 248v5h1v-5zM213 244v4h1v-4zM212 240v4h1v-4zM211 235v5h1v-5zM210 231v4h1v-4zM209 226v5h1v-5zM208 222v4h1v-4zM207 218v4h1v-4zM206 213v5h1v-5zM205 209v4h1v-4zM204 205v4h1v-4zM203 200v5h1v-5zM202 196v4h1v-4zM201 192v4h1v-4zM200 187v5h1v-5zM199 183v4h1v-4zM198 181v2h1v-2zM235 275v2h1v-2zM234 273v2h1v-2zM233 270v3h1v-3zM232 267v3h1v-3zM231 265v2h1v-2zM230 262v3h1v-3zM229 259v3h1v-3zM228 257v2h1v-2zM227 254v3h1v-3zM226 251v3h1v-3zM225 249v2h1v-2zM224 246v3h1v-3zM223 244v2h1v-2zM222 241v3h1v-3zM221 238v3h1v-3zM220 236v2h1v-2zM219 233v3h1v-3zM218 230v3h1v-3zM217 228v2h1v-2zM216 225v3h1v-3zM215 223v2h1v-2zM214 220v3h1v-3zM213 217v3h1v-3zM212 215v2h1v-2zM211 212v3h1v-3zM210 209v3h1v-3zM209 207v2h1v-2zM208 204v3h1v-3zM207 201v3h1v-3zM206 199v2h1v-2zM205 196v3h1v-3zM204 194v2h1v-2zM203 191v3h1v-3zM202 188v3h1v-3zM201 186v2h1v-2zM200 183v3h1v-3zM199 181v2h1v-2zM250 276v1h1v-1zM249 274v2h1v-2zM248 272v2h1v-2zM247 270v2h1v-2zM246 268v2h1v-2zM245 266v2h1v-2zM244 264v2h1v-2zM243 262v2h1v-2zM242 260v2h1v-2zM241 259v1h1v-1zM240 257v2h1v-2zM239 255v2h1v-2zM238 253v2h1v-2zM237 251v2h1v-2zM236 249v2h1v-2zM235 247v2h1v-2zM234 245v2h1v-2zM233 243v2h1v-2zM232 242v1h1v-1zM231 240v2h1v-2zM230 238v2h1v-2zM229 236v2h1v-2zM228 234v2h1v-2zM227 232v2h1v-2zM226 230v2h1v-2zM225 228v2h1v-2zM224 226v2h1v-2zM223 225v1h1v-1zM222 223v2h1v-2zM221 221v2h1v-2zM220 219v2h1v-2zM219 217v2h1v-2zM218 215v2h1v-2zM217 213v2h1v-2zM216 211v2h1v-2zM215 210v1h1v-1zM214 208v2h1v-2zM213 206v2h1v-2zM212 204v2h1v-2zM211 202v2h1v-2zM210 200v2h1v-2zM209 198v2h1v-2zM208 196v2h1v-2zM207 194v2h1v-2zM206 193v1h1v-1zM205 191v2h1v-2zM204 189v2h1v-2zM203 187v2h1v-2zM202 185v2h1v-2zM201 183v2h1v-2zM200 181v2h1v-2zM265 276v1h1v-1zM264 274v2h1v-2zM263 273v1h1v-1zM262 271v2h1v-2zM261 270v1h1v-1zM260 268v2h1v-2zM259 267v1h1v-1zM258 265v2h1v-2zM257 264v1h1v-1zM256 263v1h1v-1zM255 261v2h1v-2zM254 260v1h1v-1zM253 258v2h1v-2zM252 257v1h1v-1zM251 255v2h1v-2zM250 254v1h1v-1zM249 252v2h1v-2zM248 251v1h1v-1zM247 249v2h1v-2zM246 248v1h1v-1zM245 246v2h1v-2zM244 245v1h1v-1zM243 243v2h1v-2zM242 242v1h1v-1zM241 240v2h1v-2zM240 239v1h1v-1zM239 238v1h1v-1zM238 236v2h1v-2zM237 235v1h1v-1zM236 233v2h1v-2zM235 232v1h1v-1zM234 230v2h1v-2zM233 229v1h1v-1zM232 227v2h1v-2zM231 226v1h1v-1zM230 224v2h1v-2zM229 223v1h1v-1zM228 221v2h1v-2zM227 220v1h1v-1zM226 218v2h1v-2zM225 217v1h1v-1zM224 215v2h1v-2zM223 214v1h1v-1zM222 213v1h1v-1zM221 211v2h1v-2zM220 210v1h1v-1zM219 208v2h1v-2zM218 207v1h1v-1zM217 205v2h1v-2zM216 204v1h1v-1zM215 202v2h1v-2zM214 201v1h1v-1zM213 199v2h1v-2zM212 198v1h1v-1zM211 196v2h1v-2zM210 195v1h1v-1zM209 193v2h1v-2zM208 192v1h1v-1zM207 190v2h1v-2zM206 189v1h1v-1zM205 188v1h1v-1zM204 186v2h1v-2zM203 185v1h1v-1zM202 183v2h1v-2zM201 182v1h1v-1zM200 181v1h1v-1zM280 276v1h1v-1zM279 275v1h1v-1zM278 273v2h1v-2zM277 272v1h1v-1zM276 271v1h1v-1zM275 270v1h1v-1zM274 269v1h1v-1zM273 267v2h1v-2zM272 266v1h1v-1zM271 265v1h1v-1zM270 264v1h1v-1zM269 263v1h1v-1zM268 261v2h1v-2zM267 260v1h1v-1zM266 259v1h1v-1zM265 258v1h1v-1zM264 257v1h1v-1zM263 255v2h1v-2zM262 254v1h1v-1zM261 253v1h1v-1zM260 252v1h1v-1zM259 251v1h1v-1zM258 249v2h1v-2zM257 248v1h1v-1zM256 247v1h1v-1zM255 246v1h1v-1zM254 245v1h1v-1zM253 243v2h1v-2zM252 242v1h1v-1zM251 241v1h1v-1zM250 240v1h1v-1zM249 239v1h1v-1zM248 237v2h1v-2zM247 236v1h1v-1zM246 235v1h1v-1zM245 234v1h1v-1zM244 233v1h1v-1zM243 231v2h1v-2zM242 230v1h1v-1zM241 229v1h1v-1zM240 228v1h1v-1zM239 226v2h1v-2zM238 225v1h1v-1zM237 224v1h1v-1zM236 223v1h1v-1zM235 222v1h1v-1zM234 220v2h1v-2zM233 219v1h1v-1zM232 218v1h1v-1zM231 217v1h1v-1zM230 216v1h1v-1zM229 214v2h1v-2zM228 213v1h1v-1zM227 212v1h1v-1zM226 211v1h1v-1zM225 210v1h1v-1zM224 208v2h1v-2zM223 207v1h1v-1zM222 206v1h1v-1zM221 205v1h1v-1zM220 204v1h1v-1zM219 202v2h1v-2zM218 201v1h1v-1zM217 200v1h1v-1zM216 199v1h1v-1zM215 198v1h1v-1zM214 196v2h1v-2zM213 195v1h1v-1zM212 194v1h1v-1zM211 193v1h1v-1zM210 192v1h1v-1zM209 190v2h1v-2zM208 189v1h1v-1zM207 188v1h1v-1zM206 187v1h1v-1zM205 186v1h1v-1zM204 184v2h1v-2zM203 183v1h1v-1zM202 182v1h1v-1zM201 181v1h1v-1zM310 276h1v1h-1zM309 275h1v1h-1zM308 274h1v1h-1zM307 273h1v1h-1zM305 272h2v1h-2zM304 271h1v1h-1zM303 270h1v1h-1zM302 269h1v1h-1zM301 268h1v1h-1zM300 267h1v1h-1zM299 266h1v1h-1zM298 265h1v1h-1zM296 264h2v1h-2zM295 263h1v1h-1zM294 262h1v1h-1zM293 261h1v1h-1zM292 260h1v1h-1zM291 259h1v1h-1zM290 258h1v1h-1zM288 257h2v1h-2zM287 256h1v1h-1zM286 255h1v1h-1zM285 254h1v1h-1zM284 253h1v1h-1zM283 252h1v1h-1zM282 251h1v1h-1zM281 250h1v1h-1zM279 249h2v1h-2zM278 248h1v1h-1zM277 247h1v1h-1zM276 246h1v1h-1zM275 245h1v1h-1zM274 244h1v1h-1zM273 243h1v1h-1zM272 242h1v1h-1zM270 241h2v1h-2zM269 240h1v1h-1zM268 239h1v1h-1zM267 238h1v1h-1zM266 237h1v1h-1zM265 236h1v1h-1zM264 235h1v1h-1zM262 234h2v1h-2zM261 233h1v1h-1zM260 232h1v1h-1zM259 231h1v1h-1zM258 230h1v1h-1zM257 229h1v1h-1zM256 228h1v1h-1zM255 227h1v1h-1zM253 226h2v1h-2zM252 225h1v1h-1zM251 224h1v1h-1zM250 223h1v1h-1zM249 222h1v1h-1zM248 221h1v1h-1zM247 220h1v1h-1zM246 219h1v1h-1zM244 218h2v1h-2zM243 217h1v1h-1zM242 216h1v1h-1zM241 215h1v1h-1zM240 214h1v1h-1zM239 213h1v1h-1zM238 212h1v1h-1zM236 211h2v1h-2zM235 210h1v1h-1zM234 209h1v1h-1zM233 208h1v1h-1zM232 207h1v1h-1zM231 206h1v1h-1zM230 205h1v1h-1zM229 204h1v1h-1zM227 203h2v1h-2zM226 202h1v1h-1zM225 201h1v1h-1zM224 200h1v1h-1zM223 199h1v1h-1zM222 198h1v1h-1zM221 197h1v1h-1zM220 196h1v1h-1zM218 195h2v1h-2zM217 194h1v1h-1zM216 193h1v1h-1zM215 192h1v1h-1zM214 191h1v1h-1zM213 190h1v1h-1zM212 189h1v1h-1zM210 188h2v1h-2zM209 187h1v1h-1zM208 186h1v1h-1zM207 185h1v1h-1zM206 184h1v1h-1zM205 183h1v1h-1zM204 182h1v1h-1zM203 181h1v1h-1zM201 180h2v1h-2zM85 86h1v1h-1zM86 87h1v1h-1zM87 88h2v1h-2zM89 89h1v1h-1zM90 90h1v1h-1zM91 91h1v1h-1zM92 92h2v1h-2zM94 93h1v1h-1zM95 94h1v1h-1zM96 95h1v1h-1zM97 96h2v1h-2zM99 97h1v1h-1zM100 98h1v1h-1zM101 99h1v1h-1zM102 100h2v1h-2zM104 101h1v1h-1zM105 102h1v1h-1zM106 103h1v1h-1zM107 104h2v1h-2zM109 105h1v1h-1zM110 106h1v1h-1zM111 107h1v1h-1zM112 108h2v1h-2zM114 109h1v1h-1zM115 110h1v1h-1zM116 111h1v1h-1zM117 112h1v1h-1zM118 113h2v1h-2zM120 114h1v1h-1zM121 115h1v1h-1zM122 116h1v1h-1zM123 117h2v1h-2zM125 118h1v1h-1zM126 119h1v1h-1zM127 120h1v1h-1zM128 121h2v1h-2zM130 122h1v1h-1zM131 123h1v1h-1zM132 124h1v1h-1zM133 125h2v1h-2zM135 126h1v1h-1zM136 127h1v1h-1zM137 128h1v1h-1zM138 129h2v1h-2zM140 130h1v1h-1zM141 131h1v1h-1zM142 132h1v1h-1zM143 133h2v1h-2zM145 134h1v1h-1zM146 135h1v1h-1zM147 136h1v1h-1zM148 137h2v1h-2zM150 138h1v1h-1zM151 139h1v1h-1zM152 140h1v1h-1zM153 141h2v1h-2zM155 142h1v1h-1zM156 143h1v1h-1zM157 144h1v1h-1zM158 145h2v1h-2zM160 146h1v1h-1zM161 147h1v1h-1zM162 148h1v1h-1zM163 149h2v1h-2zM165 150h1v1h-1zM166 151h1v1h-1zM167 152h1v1h-1zM168 153h2v1h-2zM170 154h1v1h-1zM171 155h1v1h-1zM172 156h1v1h-1zM173 157h1v1h-1zM174 158h2v1h-2zM176 159h1v1h-1zM177 160h1v1h-1zM178 161h1v1h-1zM179 162h2v1h-2zM181 163h1v1h-1zM182 164h1v1h-1zM183 165h1v1h-1zM184 166h2v1h-2zM186 167h1v1h-1zM187 168h1v1h-1zM188 169h1v1h-1zM189 170h2v1h-2zM191 171h1v1h-1zM192 172h1v1h-1zM310 86h1v1h-1zM309 87h1v1h-1zM307 88h2v1h-2zM306 89h1v1h-1zM305 90h1v1h-1zM304 91h1v1h-1zM302 92h2v1h-2zM301 93h1v1h-1zM300 94h1v1h-1zM299 95h1v1h-1zM297 96h2v1h-2zM296 97h1v1h-1zM295 98h1v1h-1zM294 99h1v1h-1zM292 100h2v1h-2zM291 101h1v1h-1zM290 102h1v1h-1zM289 103h1v1h-1zM287 104h2v1h-2zM286 105h1v1h-1zM285 106h1v1h-1zM284 107h1v1h-1zM282 108h2v1h-2zM281 109h1v1h-1zM280 110h1v1h-1zM278 111h2v1h-2zM277 112h1v1h-1zM276 113h1v1h-1zM275 114h1v1h-1zM273 115h2v1h-2zM272 116h1v1h-1zM271 117h1v1h-1zM270 118h1v1h-1zM268 119h2v1h-2zM267 120h1v1h-1zM266 121h1v1h-1zM265 122h1v1h-1zM263 123h2v1h-2zM262 124h1v1h-1zM261 125h1v1h-1zM260 126h1v1h-1zM258 127h2v1h-2zM257 128h1v1h-1zM256 129h1v1h-1zM255 130h1v1h-1zM253 131h2v1h-2zM252 132h1v1h-1zM251 133h1v1h-1zM250 134h1v1h-1zM248 135h2v1h-2zM247 136h1v1h-1zM246 137h1v1h-1zM245 138h1v1h-1zM243 139h2v1h-2zM242 140h1v1h-1zM241 141h1v1h-1zM240 142h1v1h-1zM238 143h2v1h-2zM237 144h1v1h-1zM236 145h1v1h-1zM235 146h1v1h-1zM233 147h2v1h-2zM232 148h1v1h-1zM231 149h1v1h-1zM230 150h1v1h-1zM228 151h2v1h-2zM227 152h1v1h-1zM226 153h1v1h-1zM224 154h2v1h-2zM223 155h1v1h-1zM222 156h1v1h-1zM221 157h1v1h-1zM219 158h2v1h-2zM218 159h1v1h-1zM217 160h1v1h-1zM216 161h1v1h-1zM214 162h2v1h-2zM213 163h1v1h-1zM212 164h1v1h-1zM211 165h1v1h-1zM209 166h2v1h-2zM208 167h1v1h-1zM207 168h1v1h-1zM206 169h1v1h-1zM204 170h2v1h-2zM203 171h1v1h-1zM202 172h1v1h-1zM85 96h1v1h-1zM86 97h2v1h-2zM88 98h1v1h-1zM89 99h1v1h-1zM90 100h2v1h-2zM92 101h1v1h-1zM93 102h2v1h-2zM95 103h1v1h-1zM96 104h1v1h-1zM97 105h2v1h-2zM99 106h1v1h-1zM100 107h2v1h-2zM102 108h1v1h-1zM103 109h1v1h-1zM104 110h2v1h-2zM106 111h1v1h-1zM107 112h2v1h-2zM109 113h1v1h-1zM110 114h1v1h-1zM111 115h2v1h-2zM113 116h1v1h-1zM114 117h2v1h-2zM116 118h1v1h-1zM117 119h1v1h-1zM118 120h2v1h-2zM120 121h1v1h-1zM121 122h2v1h-2zM123 123h1v1h-1zM124 124h1v1h-1zM125 125h2v1h-2zM127 126h1v1h-1zM128 127h2v1h-2zM130 128h1v1h-1zM131 129h1v1h-1zM132 130h2v1h-2zM134 131h1v1h-1zM135 132h2v1h-2zM137 133h1v1h-1zM138 134h1v1h-1zM139 135h2v1h-2zM141 136h1v1h-1zM142 137h2v1h-2zM144 138h1v1h-1zM145 139h1v1h-1zM146 140h2v1h-2zM148 141h1v1h-1zM149 142h2v1h-2zM151 143h1v1h-1zM152 144h1v1h-1zM153 145h2v1h-2zM155 146h1v1h-1zM156 147h2v1h-2zM158 148h1v1h-1zM159 149h1v1h-1zM160 150h2v1h-2zM162 151h1v1h-1zM163 152h2v1h-2zM165 153h1v1h-1zM166 154h1v1h-1zM167 155h2v1h-2zM169 156h1v1h-1zM170 157h2v1h-2zM172 158h1v1h-1zM173 159h1v1h-1zM174 160h2v1h-2zM176 161h1v1h-1zM177 162h2v1h-2zM179 163h1v1h-1zM180 164h1v1h-1zM181 165h2v1h-2zM183 166h1v1h-1zM184 167h2v1h-2zM186 168h1v1h-1zM187 169h1v1h-1zM188 170h2v1h-2zM190 171h1v1h-1zM191 172h2v1h-2zM310 96h1v1h-1zM308 97h2v1h-2zM307 98h1v1h-1zM306 99h1v1h-1zM304 100h2v1h-2zM303 101h1v1h-1zM301 102h2v1h-2zM300 103h1v1h-1zM298 104h2v1h-2zM297 105h1v1h-1zM296 106h1v1h-1zM294 107h2v1h-2zM293 108h1v1h-1zM291 109h2v1h-2zM290 110h1v1h-1zM289 111h1v1h-1zM287 112h2v1h-2zM286 113h1v1h-1zM284 114h2v1h-2zM283 115h1v1h-1zM282 116h1v1h-1zM280 117h2v1h-2zM279 118h1v1h-1zM277 119h2v1h-2zM276 120h1v1h-1zM274 121h2v1h-2zM273 122h1v1h-1zM272 123h1v1h-1zM270 124h2v1h-2zM269 125h1v1h-1zM267 126h2v1h-2zM266 127h1v1h-1zM265 128h1v1h-1zM263 129h2v1h-2zM262 130h1v1h-1zM260 131h2v1h-2zM259 132h1v1h-1zM258 133h1v1h-1zM256 134h2v1h-2zM255 135h1v1h-1zM253 136h2v1h-2zM252 137h1v1h-1zM250 138h2v1h-2zM249 139h1v1h-1zM248 140h1v1h-1zM246 141h2v1h-2zM245 142h1v1h-1zM243 143h2v1h-2zM242 144h1v1h-1zM241 145h1v1h-1zM239 146h2v1h-2zM238 147h1v1h-1zM236 148h2v1h-2zM235 149h1v1h-1zM234 150h1v1h-1zM232 151h2v1h-2zM231 152h1v1h-1zM229 153h2v1h-2zM228 154h1v1h-1zM226 155h2v1h-2zM225 156h1v1h-1zM224 157h1v1h-1zM222 158h2v1h-2zM221 159h1v1h-1zM219 160h2v1h-2zM218 161h1v1h-1zM217 162h1v1h-1zM215 163h2v1h-2zM214 164h1v1h-1zM212 165h2v1h-2zM211 166h1v1h-1zM210 167h1v1h-1zM208 168h2v1h-2zM207 169h1v1h-1zM205 170h2v1h-2zM204 171h1v1h-1zM202 172h2v1h-2zM310 106h1v1h-1zM308 107h2v1h-2zM306 108h2v1h-2zM305 109h1v1h-1zM303 110h2v1h-2zM302 111h1v1h-1zM300 112h2v1h-2zM298 113h2v1h-2zM297 114h1v1h-1zM295 115h2v1h-2zM294 116h1v1h-1zM292 117h2v1h-2zM290 118h2v1h-2zM289 119h1v1h-1zM287 120h2v1h-2zM285 121h2v1h-2zM284 122h1v1h-1zM282 123h2v1h-2zM281 124h1v1h-1zM279 125h2v1h-2zM277 126h2v1h-2zM276 127h1v1h-1zM274 128h2v1h-2zM273 129h1v1h-1zM271 130h2v1h-2zM269 131h2v1h-2zM268 132h1v1h-1zM266 133h2v1h-2zM264 134h2v1h-2zM263 135h1v1h-1zM261 136h2v1h-2zM260 137h1v1h-1zM258 138h2v1h-2zM256 139h2v1h-2zM255 140h1v1h-1zM253 141h2v1h-2zM252 142h1v1h-1zM250 143h2v1h-2zM248 144h2v1h-2zM247 145h1v1h-1zM245 146h2v1h-2zM244 147h1v1h-1zM242 148h2v1h-2zM240 149h2v1h-2zM239 150h1v1h-1zM237 151h2v1h-2zM235 152h2v1h-2zM234 153h1v1h-1zM232 154h2v1h-2zM231 155h1v1h-1zM229 156h2v1h-2zM227 157h2v1h-2zM226 158h1v1h-1zM224 159h2v1h-2zM223 160h1v1h-1zM221 161h2v1h-2zM219 162h2v1h-2zM218 163h1v1h-1zM216 164h2v1h-2zM214 165h2v1h-2zM213 166h1v1h-1zM211 167h2v1h-2zM210 168h1v1h-1zM208 169h2v1h-2zM206 170h2v1h-2zM205 171h1v1h-1zM203 172h2v1h-2zM202 173h1v1h-1zM85 116h1v1h-1zM86 117h2v1h-2zM88 118h2v1h-2zM90 119h2v1h-2zM92 120h2v1h-2zM94 121h2v1h-2zM96 122h2v1h-2zM98 123h2v1h-2zM100 124h1v1h-1zM101 125h2v1h-2zM103 126h2v1h-2zM105 127h2v1h-2zM107 128h2v1h-2zM109 129h2v1h-2zM111 130h2v1h-2zM113 131h1v1h-1zM114 132h2v1h-2zM116 133h2v1h-2zM118 134h2v1h-2zM120 135h2v1h-2zM122 136h2v1h-2zM124 137h2v1h-2zM126 138h2v1h-2zM128 139h1v1h-1zM129 140h2v1h-2zM131 141h2v1h-2zM133 142h2v1h-2zM135 143h2v1h-2zM137 144h2v1h-2zM139 145h2v1h-2zM141 146h1v1h-1zM142 147h2v1h-2zM144 148h2v1h-2zM146 149h2v1h-2zM148 150h2v1h-2zM150 151h2v1h-2zM152 152h2v1h-2zM154 153h2v1h-2zM156 154h1v1h-1zM157 155h2v1h-2zM159 156h2v1h-2zM161 157h2v1h-2zM163 158h2v1h-2zM165 159h2v1h-2zM167 160h2v1h-2zM169 161h1v1h-1zM170 162h2v1h-2zM172 163h2v1h-2zM174 164h2v1h-2zM176 165h2v1h-2zM178 166h2v1h-2zM180 167h2v1h-2zM182 168h2v1h-2zM184 169h1v1h-1zM185 170h2v1h-2zM187 171h2v1h-2zM189 172h2v1h-2zM191 173h2v1h-2zM310 116h1v1h-1zM308 117h2v1h-2zM306 118h2v1h-2zM304 119h2v1h-2zM302 120h2v1h-2zM300 121h2v1h-2zM298 122h2v1h-2zM296 123h2v1h-2zM294 124h2v1h-2zM293 125h1v1h-1zM291 126h2v1h-2zM289 127h2v1h-2zM287 128h2v1h-2zM285 129h2v1h-2zM283 130h2v1h-2zM281 131h2v1h-2zM279 132h2v1h-2zM278 133h1v1h-1zM276 134h2v1h-2zM274 135h2v1h-2zM272 136h2v1h-2zM270 137h2v1h-2zM268 138h2v1h-2zM266 139h2v1h-2zM264 140h2v1h-2zM262 141h2v1h-2zM261 142h1v1h-1zM259 143h2v1h-2zM257 144h2v1h-2zM255 145h2v1h-2zM253 146h2v1h-2zM251 147h2v1h-2zM249 148h2v1h-2zM247 149h2v1h-2zM246 150h1v1h-1zM244 151h2v1h-2zM242 152h2v1h-2zM240 153h2v1h-2zM238 154h2v1h-2zM236 155h2v1h-2zM234 156h2v1h-2zM232 157h2v1h-2zM230 158h2v1h-2zM229 159h1v1h-1zM227 160h2v1h-2zM225 161h2v1h-2zM223 162h2v1h-2zM221 163h2v1h-2zM219 164h2v1h-2zM217 165h2v1h-2zM215 166h2v1h-2zM214 167h1v1h-1zM212 168h2v1h-2zM210 169h2v1h-2zM208 170h2v1h-2zM206 171h2v1h-2zM204 172h2v1h-2zM202 173h2v1h-2zM85 126h2v1h-2zM87 127h2v1h-2zM89 128h2v1h-2zM91 129h2v1h-2zM93 130h3v1h-3zM96 131h2v1h-2zM98 132h2v1h-2zM100 133h2v1h-2zM102 134h3v1h-3zM105 135h2v1h-2zM107 136h2v1h-2zM109 137h2v1h-2zM111 138h3v1h-3zM114 139h2v1h-2zM116 140h2v1h-2zM118 141h2v1h-2zM120 142h2v1h-2zM122 143h3v1h-3zM125 144h2v1h-2zM127 145h2v1h-2zM129 146h2v1h-2zM131 147h3v1h-3zM134 148h2v1h-2zM136 149h2v1h-2zM138 150h2v1h-2zM140 151h3v1h-3zM143 152h2v1h-2zM145 153h2v1h-2zM147 154h2v1h-2zM149 155h3v1h-3zM152 156h2v1h-2zM154 157h2v1h-2zM156 158h2v1h-2zM158 159h3v1h-3zM161 160h2v1h-2zM163 161h2v1h-2zM165 162h2v1h-2zM167 163h3v1h-3zM170 164h2v1h-2zM172 165h2v1h-2zM174 166h2v1h-2zM176 167h2v1h-2zM178 168h3v1h-3zM181 169h2v1h-2zM183 170h2v1h-2zM185 171h2v1h-2zM187 172h3v1h-3zM190 173h2v1h-2zM309 126h2v1h-2zM307 127h2v1h-2zM305 128h2v1h-2zM303 129h2v1h-2zM300 130h3v1h-3zM298 131h2v1h-2zM296 132h2v1h-2zM294 133h2v1h-2zM291 134h3v1h-3zM289 135h2v1h-2zM287 136h2v1h-2zM285 137h2v1h-2zM282 138h3v1h-3zM280 139h2v1h-2zM278 140h2v1h-2zM275 141h3v1h-3zM273 142h2v1h-2zM271 143h2v1h-2zM269 144h2v1h-2zM266 145h3v1h-3zM264 146h2v1h-2zM262 147h2v1h-2zM260 148h2v1h-2zM257 149h3v1h-3zM255 150h2v1h-2zM253 151h2v1h-2zM251 152h2v1h-2zM248 153h3v1h-3zM246 154h2v1h-2zM244 155h2v1h-2zM242 156h2v1h-2zM239 157h3v1h-3zM237 158h2v1h-2zM235 159h2v1h-2zM233 160h2v1h-2zM230 161h3v1h-3zM228 162h2v1h-2zM226 163h2v1h-2zM223 164h3v1h-3zM221 165h2v1h-2zM219 166h2v1h-2zM217 167h2v1h-2zM214 168h3v1h-3zM212 169h2v1h-2zM210 170h2v1h-2zM208 171h2v1h-2zM205 172h3v1h-3zM203 173h2v1h-2zM85 136h2v1h-2zM87 137h3v1h-3zM90 138h3v1h-3zM93 139h2v1h-2zM95 140h3v1h-3zM98 141h3v1h-3zM101 142h3v1h-3zM104 143h3v1h-3zM107 144h2v1h-2zM109 145h3v1h-3zM112 146h3v1h-3zM115 147h3v1h-3zM118 148h3v1h-3zM121 149h2v1h-2zM123 150h3v1h-3zM126 151h3v1h-3zM129 152h3v1h-3zM132 153h3v1h-3zM135 154h2v1h-2zM137 155h3v1h-3zM140 156h3v1h-3zM143 157h3v1h-3zM146 158h3v1h-3zM149 159h2v1h-2zM151 160h3v1h-3zM154 161h3v1h-3zM157 162h3v1h-3zM160 163h3v1h-3zM163 164h2v1h-2zM165 165h3v1h-3zM168 166h3v1h-3zM171 167h3v1h-3zM174 168h3v1h-3zM177 169h2v1h-2zM179 170h3v1h-3zM182 171h3v1h-3zM185 172h3v1h-3zM188 173h3v1h-3zM191 174h1v1h-1zM85 146h2v1h-2zM87 147h4v1h-4zM91 148h4v1h-4zM95 149h4v1h-4zM99 150h3v1h-3zM102 151h4v1h-4zM106 152h4v1h-4zM110 153h4v1h-4zM114 154h3v1h-3zM117 155h4v1h-4zM121 156h4v1h-4zM125 157h3v1h-3zM128 158h4v1h-4zM132 159h4v1h-4zM136 160h4v1h-4zM140 161h3v1h-3zM143 162h4v1h-4zM147 163h4v1h-4zM151 164h4v1h-4zM155 165h3v1h-3zM158 166h4v1h-4zM162 167h4v1h-4zM166 168h4v1h-4zM170 169h3v1h-3zM173 170h4v1h-4zM177 171h4v1h-4zM181 172h3v1h-3zM184 173h4v1h-4zM188 174h4v1h-4zM309 146h2v1h-2zM305 147h4v1h-4zM301 148h4v1h-4zM297 149h4v1h-4zM294 150h3v1h-3zM290 151h4v1h-4zM286 152h4v1h-4zM282 153h4v1h-4zM278 154h4v1h-4zM275 155h3v1h-3zM271 156h4v1h-4zM267 157h4v1h-4zM263 158h4v1h-4zM260 159h3v1h-3zM256 160h4v1h-4zM252 161h4v1h-4zM248 162h4v1h-4zM245 163h3v1h-3zM241 164h4v1h-4zM237 165h4v1h-4zM233 166h4v1h-4zM230 167h3v1h-3zM226 168h4v1h-4zM222 169h4v1h-4zM218 170h4v1h-4zM214 171h4v1h-4zM211 172h3v1h-3zM207 173h4v1h-4zM203 174h4v1h-4zM85 156h3v1h-3zM88 157h6v1h-6zM94 158h6v1h-6zM100 159h5v1h-5zM105 160h6v1h-6zM111 161h5v1h-5zM116 162h6v1h-6zM122 163h6v1h-6zM128 164h5v1h-5zM133 165h6v1h-6zM139 166h5v1h-5zM144 167h6v1h-6zM150 168h6v1h-6zM156 169h5v1h-5zM161 170h6v1h-6zM167 171h5v1h-5zM172 172h6v1h-6zM178 173h6v1h-6zM184 174h5v1h-5zM189 175h2v1h-2zM308 156h3v1h-3zM302 157h6v1h-6zM296 158h6v1h-6zM291 159h5v1h-5zM285 160h6v1h-6zM279 161h6v1h-6zM274 162h5v1h-5zM268 163h6v1h-6zM262 164h6v1h-6zM257 165h5v1h-5zM251 166h6v1h-6zM246 167h5v1h-5zM240 168h6v1h-6zM234 169h6v1h-6zM229 170h5v1h-5zM223 171h6v1h-6zM217 172h6v1h-6zM212 173h5v1h-5zM206 174h6v1h-6zM204 175h2v1h-2zM305 166h6v1h-6zM294 167h11v1h-11zM282 168h12v1h-12zM271 169h11v1h-11zM260 170h11v1h-11zM248 171h12v1h-12zM237 172h11v1h-11zM226 173h11v1h-11zM214 174h12v1h-12zM204 175h10v1h-10zM85 176h106v1h-106zM204 176h107v1h-107zM85 186h6v1h-6zM91 185h11v1h-11zM102 184h12v1h-12zM114 183h11v1h-11zM125 182h11v1h-11zM136 181h11v1h-11zM147 180h11v1h-11zM158 179h12v1h-12zM170 178h11v1h-11zM181 177h10v1h-10zM305 186h6v1h-6zM294 185h11v1h-11zM282 184h12v1h-12zM271 183h11v1h-11zM260 182h11v1h-11zM248 181h12v1h-12zM237 180h11v1h-11zM226 179h11v1h-11zM214 178h12v1h-12zM204 177h10v1h-10zM85 196h3v1h-3zM88 195h6v1h-6zM94 194h6v1h-6zM100 193h5v1h-5zM105 192h6v1h-6zM111 191h5v1h-5zM116 190h6v1h-6zM122 189h6v1h-6zM128 188h5v1h-5zM133 187h6v1h-6zM139 186h5v1h-5zM144 185h6v1h-6zM150 184h6v1h-6zM156 183h5v1h-5zM161 182h6v1h-6zM167 181h5v1h-5zM172 180h6v1h-6zM178 179h6v1h-6zM184 178h5v1h-5zM189 177h2v1h-2zM308 196h3v1h-3zM302 195h6v1h-6zM296 194h6v1h-6zM291 193h5v1h-5zM285 192h6v1h-6zM279 191h6v1h-6zM274 190h5v1h-5zM268 189h6v1h-6zM262 188h6v1h-6zM257 187h5v1h-5zM251 186h6v1h-6zM246 185h5v1h-5zM240 184h6v1h-6zM234 183h6v1h-6zM229 182h5v1h-5zM223 181h6v1h-6zM217 180h6v1h-6zM212 179h5v1h-5zM206 178h6v1h-6zM204 177h2v1h-2zM85 206h2v1h-2zM87 205h4v1h-4zM91 204h4v1h-4zM95 203h4v1h-4zM99 202h3v1h-3zM102 201h4v1h-4zM106 200h4v1h-4zM110 199h4v1h-4zM114 198h3v1h-3zM117 197h4v1h-4zM121 196h4v1h-4zM125 195h3v1h-3zM128 194h4v1h-4zM132 193h4v1h-4zM136 192h4v1h-4zM140 191h3v1h-3zM143 190h4v1h-4zM147 189h4v1h-4zM151 188h4v1h-4zM155 187h3v1h-3zM158 186h4v1h-4zM162 185h4v1h-4zM166 184h4v1h-4zM170 183h3v1h-3zM173 182h4v1h-4zM177 181h4v1h-4zM181 180h3v1h-3zM184 179h4v1h-4zM188 178h4v1h-4zM309 216h2v1h-2zM306 215h3v1h-3zM303 214h3v1h-3zM301 213h2v1h-2zM298 212h3v1h-3zM295 211h3v1h-3zM292 210h3v1h-3zM289 209h3v1h-3zM286 208h3v1h-3zM284 207h2v1h-2zM281 206h3v1h-3zM278 205h3v1h-3zM275 204h3v1h-3zM272 203h3v1h-3zM270 202h2v1h-2zM267 201h3v1h-3zM264 200h3v1h-3zM261 199h3v1h-3zM258 198h3v1h-3zM255 197h3v1h-3zM253 196h2v1h-2zM250 195h3v1h-3zM247 194h3v1h-3zM244 193h3v1h-3zM241 192h3v1h-3zM238 191h3v1h-3zM236 190h2v1h-2zM233 189h3v1h-3zM230 188h3v1h-3zM227 187h3v1h-3zM224 186h3v1h-3zM222 185h2v1h-2zM219 184h3v1h-3zM216 183h3v1h-3zM213 182h3v1h-3zM210 181h3v1h-3zM207 180h3v1h-3zM205 179h2v1h-2zM203 178h2v1h-2zM85 226h2v1h-2zM87 225h2v1h-2zM89 224h2v1h-2zM91 223h2v1h-2zM93 222h3v1h-3zM96 221h2v1h-2zM98 220h2v1h-2zM100 219h2v1h-2zM102 218h3v1h-3zM105 217h2v1h-2zM107 216h2v1h-2zM109 215h2v1h-2zM111 214h3v1h-3zM114 213h2v1h-2zM116 212h2v1h-2zM118 211h2v1h-2zM120 210h2v1h-2zM122 209h3v1h-3zM125 208h2v1h-2zM127 207h2v1h-2zM129 206h2v1h-2zM131 205h3v1h-3zM134 204h2v1h-2zM136 203h2v1h-2zM138 202h2v1h-2zM140 201h3v1h-3zM143 200h2v1h-2zM145 199h2v1h-2zM147 198h2v1h-2zM149 197h3v1h-3zM152 196h2v1h-2zM154 195h2v1h-2zM156 194h2v1h-2zM158 193h3v1h-3zM161 192h2v1h-2zM163 191h2v1h-2zM165 190h2v1h-2zM167 189h3v1h-3zM170 188h2v1h-2zM172 187h2v1h-2zM174 186h2v1h-2zM176 185h2v1h-2zM178 184h3v1h-3zM181 183h2v1h-2zM183 182h2v1h-2zM185 181h2v1h-2zM187 180h3v1h-3zM190 179h2v1h-2zM309 226h2v1h-2zM307 225h2v1h-2zM305 224h2v1h-2zM303 223h2v1h-2zM300 222h3v1h-3zM298 221h2v1h-2zM296 220h2v1h-2zM294 219h2v1h-2zM291 218h3v1h-3zM289 217h2v1h-2zM287 216h2v1h-2zM285 215h2v1h-2zM282 214h3v1h-3zM280 213h2v1h-2zM278 212h2v1h-2zM275 211h3v1h-3zM273 210h2v1h-2zM271 209h2v1h-2zM269 208h2v1h-2zM266 207h3v1h-3zM264 206h2v1h-2zM262 205h2v1h-2zM260 204h2v1h-2zM257 203h3v1h-3zM255 202h2v1h-2zM253 201h2v1h-2zM251 200h2v1h-2zM248 199h3v1h-3zM246 198h2v1h-2zM244 197h2v1h-2zM242 196h2v1h-2zM239 195h3v1h-3zM237 194h2v1h-2zM235 193h2v1h-2zM233 192h2v1h-2zM230 191h3v1h-3zM228 190h2v1h-2zM226 189h2v1h-2zM223 188h3v1h-3zM221 187h2v1h-2zM219 186h2v1h-2zM217 185h2v1h-2zM214 184h3v1h-3zM212 183h2v1h-2zM210 182h2v1h-2zM208 181h2v1h-2zM205 180h3v1h-3zM203 179h2v1h-2zM85 236h1v1h-1zM86 235h2v1h-2zM88 234h2v1h-2zM90 233h2v1h-2zM92 232h2v1h-2zM94 231h2v1h-2zM96 230h2v1h-2zM98 229h2v1h-2zM100 228h1v1h-1zM101 227h2v1h-2zM103 226h2v1h-2zM105 225h2v1h-2zM107 224h2v1h-2zM109 223h2v1h-2zM111 222h2v1h-2zM113 221h1v1h-1zM114 220h2v1h-2zM116 219h2v1h-2zM118 218h2v1h-2zM120 217h2v1h-2zM122 216h2v1h-2zM124 215h2v1h-2zM126 214h2v1h-2zM128 213h1v1h-1zM129 212h2v1h-2zM131 211h2v1h-2zM133 210h2v1h-2zM135 209h2v1h-2zM137 208h2v1h-2zM139 207h2v1h-2zM141 206h1v1h-1zM142 205h2v1h-2zM144 204h2v1h-2zM146 203h2v1h-2zM148 202h2v1h-2zM150 201h2v1h-2zM152 200h2v1h-2zM154 199h2v1h-2zM156 198h1v1h-1zM157 197h2v1h-2zM159 196h2v1h-2zM161 195h2v1h-2zM163 194h2v1h-2zM165 193h2v1h-2zM167 192h2v1h-2zM169 191h1v1h-1zM170 190h2v1h-2zM172 189h2v1h-2zM174 188h2v1h-2zM176 187h2v1h-2zM178 186h2v1h-2zM180 185h2v1h-2zM182 184h2v1h-2zM184 183h1v1h-1zM185 182h2v1h-2zM187 181h2v1h-2zM189 180h2v1h-2zM191 179h2v1h-2zM310 236h1v1h-1zM308 235h2v1h-2zM306 234h2v1h-2zM304 233h2v1h-2zM302 232h2v1h-2zM300 231h2v1h-2zM298 230h2v1h-2zM296 229h2v1h-2zM294 228h2v1h-2zM293 227h1v1h-1zM291 226h2v1h-2zM289 225h2v1h-2zM287 224h2v1h-2zM285 223h2v1h-2zM283 222h2v1h-2zM281 221h2v1h-2zM279 220h2v1h-2zM278 219h1v1h-1zM276 218h2v1h-2zM274 217h2v1h-2zM272 216h2v1h-2zM270 215h2v1h-2zM268 214h2v1h-2zM266 213h2v1h-2zM264 212h2v1h-2zM262 211h2v1h-2zM261 210h1v1h-1zM259 209h2v1h-2zM257 208h2v1h-2zM255 207h2v1h-2zM253 206h2v1h-2zM251 205h2v1h-2zM249 204h2v1h-2zM247 203h2v1h-2zM246 202h1v1h-1zM244 201h2v1h-2zM242 200h2v1h-2zM240 199h2v1h-2zM238 198h2v1h-2zM236 197h2v1h-2zM234 196h2v1h-2zM232 195h2v1h-2zM230 194h2v1h-2zM229 193h1v1h-1zM227 192h2v1h-2zM225 191h2v1h-2zM223 190h2v1h-2zM221 189h2v1h-2zM219 188h2v1h-2zM217 187h2v1h-2zM215 186h2v1h-2zM214 185h1v1h-1zM212 184h2v1h-2zM210 183h2v1h-2zM208 182h2v1h-2zM206 181h2v1h-2zM204 180h2v1h-2zM202 179h2v1h-2zM310 246h1v1h-1zM308 245h2v1h-2zM306 244h2v1h-2zM305 243h1v1h-1zM303 242h2v1h-2zM302 241h1v1h-1zM300 240h2v1h-2zM298 239h2v1h-2zM297 238h1v1h-1zM295 237h2v1h-2zM294 236h1v1h-1zM292 235h2v1h-2zM290 234h2v1h-2zM289 233h1v1h-1zM287 232h2v1h-2zM285 231h2v1h-2zM284 230h1v1h-1zM282 229h2v1h-2zM281 228h1v1h-1zM279 227h2v1h-2zM277 226h2v1h-2zM276 225h1v1h-1zM274 224h2v1h-2zM273 223h1v1h-1zM271 222h2v1h-2zM269 221h2v1h-2zM268 220h1v1h-1zM266 219h2v1h-2zM264 218h2v1h-2zM263 217h1v1h-1zM261 216h2v1h-2zM260 215h1v1h-1zM258 214h2v1h-2zM256 213h2v1h-2zM255 212h1v1h-1zM253 211h2v1h-2zM252 210h1v1h-1zM250 209h2v1h-2zM248 208h2v1h-2zM247 207h1v1h-1zM245 206h2v1h-2zM244 205h1v1h-1zM242 204h2v1h-2zM240 203h2v1h-2zM239 202h1v1h-1zM237 201h2v1h-2zM235 200h2v1h-2zM234 199h1v1h-1zM232 198h2v1h-2zM231 197h1v1h-1zM229 196h2v1h-2zM227 195h2v1h-2zM226 194h1v1h-1zM224 193h2v1h-2zM223 192h1v1h-1zM221 191h2v1h-2zM219 190h2v1h-2zM218 189h1v1h-1zM216 188h2v1h-2zM214 187h2v1h-2zM213 186h1v1h-1zM211 185h2v1h-2zM210 184h1v1h-1zM208 183h2v1h-2zM206 182h2v1h-2zM205 181h1v1h-1zM203 180h2v1h-2zM202 179h1v1h-1zM85 256h1v1h-1zM86 255h2v1h-2zM88 254h1v1h-1zM89 253h1v1h-1zM90 252h2v1h-2zM92 251h1v1h-1zM93 250h2v1h-2zM95 249h1v1h-1zM96 248h1v1h-1zM97 247h2v1h-2zM99 246h1v1h-1zM100 245h2v1h-2zM102 244h1v1h-1zM103 243h1v1h-1zM104 242h2v1h-2zM106 241h1v1h-1zM107 240h2v1h-2zM109 239h1v1h-1zM110 238h1v1h-1zM111 237h2v1h-2zM113 236h1v1h-1zM114 235h2v1h-2zM116 234h1v1h-1zM117 233h1v1h-1zM118 232h2v1h-2zM120 231h1v1h-1zM121 230h2v1h-2zM123 229h1v1h-1zM124 228h1v1h-1zM125 227h2v1h-2zM127 226h1v1h-1zM128 225h2v1h-2zM130 224h1v1h-1zM131 223h1v1h-1zM132 222h2v1h-2zM134 221h1v1h-1zM135 220h2v1h-2zM137 219h1v1h-1zM138 218h1v1h-1zM139 217h2v1h-2zM141 216h1v1h-1zM142 215h2v1h-2zM144 214h1v1h-1zM145 213h1v1h-1zM146 212h2v1h-2zM148 211h1v1h-1zM149 210h2v1h-2zM151 209h1v1h-1zM152 208h1v1h-1zM153 207h2v1h-2zM155 206h1v1h-1zM156 205h2v1h-2zM158 204h1v1h-1zM159 203h1v1h-1zM160 202h2v1h-2zM162 201h1v1h-1zM163 200h2v1h-2zM165 199h1v1h-1zM166 198h1v1h-1zM167 197h2v1h-2zM169 196h1v1h-1zM170 195h2v1h-2zM172 194h1v1h-1zM173 193h1v1h-1zM174 192h2v1h-2zM176 191h1v1h-1zM177 190h2v1h-2zM179 189h1v1h-1zM180 188h1v1h-1zM181 187h2v1h-2zM183 186h1v1h-1zM184 185h2v1h-2zM186 184h1v1h-1zM187 183h1v1h-1zM188 182h2v1h-2zM190 181h1v1h-1zM191 180h2v1h-2zM310 256h1v1h-1zM308 255h2v1h-2zM307 254h1v1h-1zM306 253h1v1h-1zM304 252h2v1h-2zM303 251h1v1h-1zM301 250h2v1h-2zM300 249h1v1h-1zM298 248h2v1h-2zM297 247h1v1h-1zM296 246h1v1h-1zM294 245h2v1h-2zM293 244h1v1h-1zM291 243h2v1h-2zM290 242h1v1h-1zM289 241h1v1h-1zM287 240h2v1h-2zM286 239h1v1h-1zM284 238h2v1h-2zM283 237h1v1h-1zM282 236h1v1h-1zM280 235h2v1h-2zM279 234h1v1h-1zM277 233h2v1h-2zM276 232h1v1h-1zM274 231h2v1h-2zM273 230h1v1h-1zM272 229h1v1h-1zM270 228h2v1h-2zM269 227h1v1h-1zM267 226h2v1h-2zM266 225h1v1h-1zM265 224h1v1h-1zM263 223h2v1h-2zM262 222h1v1h-1zM260 221h2v1h-2zM259 220h1v1h-1zM258 219h1v1h-1zM256 218h2v1h-2zM255 217h1v1h-1zM253 216h2v1h-2zM252 215h1v1h-1zM250 214h2v1h-2zM249 213h1v1h-1zM248 212h1v1h-1zM246 211h2v1h-2zM245 210h1v1h-1zM243 209h2v1h-2zM242 208h1v1h-1zM241 207h1v1h-1zM239 206h2v1h-2zM238 205h1v1h-1zM236 204h2v1h-2zM235 203h1v1h-1zM234 202h1v1h-1zM232 201h2v1h-2zM231 200h1v1h-1zM229 199h2v1h-2zM228 198h1v1h-1zM226 197h2v1h-2zM225 196h1v1h-1zM224 195h1v1h-1zM222 194h2v1h-2zM221 193h1v1h-1zM219 192h2v1h-2zM218 191h1v1h-1zM217 190h1v1h-1zM215 189h2v1h-2zM214 188h1v1h-1zM212 187h2v1h-2zM211 186h1v1h-1zM210 185h1v1h-1zM208 184h2v1h-2zM207 183h1v1h-1zM205 182h2v1h-2zM204 181h1v1h-1zM202 180h2v1h-2zM85 266h1v1h-1zM86 265h1v1h-1zM87 264h2v1h-2zM89 263h1v1h-1zM90 262h1v1h-1zM91 261h1v1h-1zM92 260h2v1h-2zM94 259h1v1h-1zM95 258h1v1h-1zM96 257h1v1h-1zM97 256h2v1h-2zM99 255h1v1h-1zM100 254h1v1h-1zM101 253h1v1h-1zM102 252h2v1h-2zM104 251h1v1h-1zM105 250h1v1h-1zM106 249h1v1h-1zM107 248h2v1h-2zM109 247h1v1h-1zM110 246h1v1h-1zM111 245h1v1h-1zM112 244h2v1h-2zM114 243h1v1h-1zM115 242h1v1h-1zM116 241h1v1h-1zM117 240h1v1h-1zM118 239h2v1h-2zM120 238h1v1h-1zM121 237h1v1h-1zM122 236h1v1h-1zM123 235h2v1h-2zM125 234h1v1h-1zM126 233h1v1h-1zM127 232h1v1h-1zM128 231h2v1h-2zM130 230h1v1h-1zM131 229h1v1h-1zM132 228h1v1h-1zM133 227h2v1h-2zM135 226h1v1h-1zM136 225h1v1h-1zM137 224h1v1h-1zM138 223h2v1h-2zM140 222h1v1h-1zM141 221h1v1h-1zM142 220h1v1h-1zM143 219h2v1h-2zM145 218h1v1h-1zM146 217h1v1h-1zM147 216h1v1h-1zM148 215h2v1h-2zM150 214h1v1h-1zM151 213h1v1h-1zM152 212h1v1h-1zM153 211h2v1h-2zM155 210h1v1h-1zM156 209h1v1h-1zM157 208h1v1h-1zM158 207h2v1h-2zM160 206h1v1h-1zM161 205h1v1h-1zM162 204h1v1h-1zM163 203h2v1h-2zM165 202h1v1h-1zM166 201h1v1h-1zM167 200h1v1h-1zM168 199h2v1h-2zM170 198h1v1h-1zM171 197h1v1h-1zM172 196h1v1h-1zM173 195h1v1h-1zM174 194h2v1h-2zM176 193h1v1h-1zM177 192h1v1h-1zM178 191h1v1h-1zM179 190h2v1h-2zM181 189h1v1h-1zM182 188h1v1h-1zM183 187h1v1h-1zM184 186h2v1h-2zM186 185h1v1h-1zM187 184h1v1h-1zM188 183h1v1h-1zM189 182h2v1h-2zM191 181h1v1h-1zM192 180h1v1h-1z"/>
<path fill="#e8a820" d="M145 76v1h1v-1zM146 77v2h1v-2zM147 79v2h1v-2zM148 81v2h1v-2zM149 83v2h1v-2zM150 85v2h1v-2zM151 87v2h1v-2zM152 89v2h1v-2zM153 91v2h1v-2zM154 93v2h1v-2zM155 95v2h1v-2zM156 97v2h1v-2zM157 99v2h1v-2zM158 101v1h1v-1zM159 102v2h1v-2zM160 104v2h1v-2zM161 106v2h1v-2zM162 108v2h1v-2zM163 110v2h1v-2zM164 112v2h1v-2zM165 114v2h1v-2zM166 116v2h1v-2zM167 118v2h1v-2zM168 120v2h1v-2zM169 122v2h1v-2zM170 124v2h1v-2zM171 126v1h1v-1zM172 127v2h1v-2zM173 129v2h1v-2zM174 131v2h1v-2zM175 133v2h1v-2zM176 135v2h1v-2zM177 137v2h1v-2zM178 139v2h1v-2zM179 141v2h1v-2zM180 143v2h1v-2zM181 145v2h1v-2zM182 147v2h1v-2zM183 149v2h1v-2zM184 151v1h1v-1zM185 152v2h1v-2zM186 154v2h1v-2zM187 156v2h1v-2zM188 158v2h1v-2zM189 160v2h1v-2zM190 162v2h1v-2zM191 164v2h1v-2zM192 166v2h1v-2zM193 168v2h1v-2zM194 170v2h1v-2zM175 274v3h1v-3zM176 270v4h1v-4zM177 265v5h1v-5zM178 261v4h1v-4zM179 256v5h1v-5zM180 251v5h1v-5zM181 247v4h1v-4zM182 242v5h1v-5zM183 238v4h1v-4zM184 233v5h1v-5zM185 229v4h1v-4zM186 224v5h1v-5zM187 220v4h1v-4zM188 215v5h1v-5zM189 211v4h1v-4zM190 206v5h1v-5zM191 201v5h1v-5zM192 197v4h1v-4zM193 192v5h1v-5zM194 188v4h1v-4zM195 183v5h1v-5zM196 181v2h1v-2zM85 216h2v1h-2zM87 215h3v1h-3zM90 214h3v1h-3zM93 213h2v1h-2zM95 212h3v1h-3zM98 211h3v1h-3zM101 210h3v1h-3zM104 209h3v1h-3zM107 208h2v1h-2zM109 207h3v1h-3zM112 206h3v1h-3zM115 205h3v1h-3zM118 204h3v1h-3zM121 203h2v1h-2zM123 202h3v1h-3zM126 201h3v1h-3zM129 200h3v1h-3zM132 199h3v1h-3zM135 198h2v1h-2zM137 197h3v1h-3zM140 196h3v1h-3zM143 195h3v1h-3zM146 194h3v1h-3zM149 193h2v1h-2zM151 192h3v1h-3zM154 191h3v1h-3zM157 190h3v1h-3zM160 189h3v1h-3zM163 188h2v1h-2zM165 187h3v1h-3zM168 186h3v1h-3zM171 185h3v1h-3zM174 184h3v1h-3zM177 183h2v1h-2zM179 182h3v1h-3zM182 181h3v1h-3zM185 180h3v1h-3zM188 179h3v1h-3zM191 178h1v1h-1z"/>
<path fill="#ff4a14" d="M160 76v2h1v-2zM161 78v3h1v-3zM162 81v2h1v-2zM163 83v3h1v-3zM164 86v3h1v-3zM165 89v2h1v-2zM166 91v3h1v-3zM167 94v3h1v-3zM168 97v2h1v-2zM169 99v3h1v-3zM170 102v3h1v-3zM171 105v3h1v-3zM172 108v2h1v-2zM173 110v3h1v-3zM174 113v3h1v-3zM175 116v2h1v-2zM176 118v3h1v-3zM177 121v3h1v-3zM178 124v3h1v-3zM179 127v2h1v-2zM180 129v3h1v-3zM181 132v3h1v-3zM182 135v2h1v-2zM183 137v3h1v-3zM184 140v3h1v-3zM185 143v2h1v-2zM186 145v3h1v-3zM187 148v3h1v-3zM188 151v3h1v-3zM189 154v2h1v-2zM190 156v3h1v-3zM191 159v3h1v-3zM192 162v2h1v-2zM193 164v3h1v-3zM194 167v3h1v-3zM195 170v2h1v-2zM280 76v1h1v-1zM279 77v1h1v-1zM278 78v2h1v-2zM277 80v1h1v-1zM276 81v1h1v-1zM275 82v1h1v-1zM274 83v1h1v-1zM273 84v2h1v-2zM272 86v1h1v-1zM271 87v1h1v-1zM270 88v1h1v-1zM269 89v1h1v-1zM268 90v2h1v-2zM267 92v1h1v-1zM266 93v1h1v-1zM265 94v1h1v-1zM264 95v1h1v-1zM263 96v2h1v-2zM262 98v1h1v-1zM261 99v1h1v-1zM260 100v1h1v-1zM259 101v1h1v-1zM258 102v2h1v-2zM257 104v1h1v-1zM256 105v1h1v-1zM255 106v1h1v-1zM254 107v1h1v-1zM253 108v2h1v-2zM252 110v1h1v-1zM251 111v1h1v-1zM250 112v1h1v-1zM249 113v1h1v-1zM248 114v2h1v-2zM247 116v1h1v-1zM246 117v1h1v-1zM245 118v1h1v-1zM244 119v1h1v-1zM243 120v2h1v-2zM242 122v1h1v-1zM241 123v1h1v-1zM240 124v1h1v-1zM239 125v2h1v-2zM238 127v1h1v-1zM237 128v1h1v-1zM236 129v1h1v-1zM235 130v1h1v-1zM234 131v2h1v-2zM233 133v1h1v-1zM232 134v1h1v-1zM231 135v1h1v-1zM230 136v1h1v-1zM229 137v2h1v-2zM228 139v1h1v-1zM227 140v1h1v-1zM226 141v1h1v-1zM225 142v1h1v-1zM224 143v2h1v-2zM223 145v1h1v-1zM222 146v1h1v-1zM221 147v1h1v-1zM220 148v1h1v-1zM219 149v2h1v-2zM218 151v1h1v-1zM217 152v1h1v-1zM216 153v1h1v-1zM215 154v1h1v-1zM214 155v2h1v-2zM213 157v1h1v-1zM212 158v1h1v-1zM211 159v1h1v-1zM210 160v1h1v-1zM209 161v2h1v-2zM208 163v1h1v-1zM207 164v1h1v-1zM206 165v1h1v-1zM205 166v1h1v-1zM204 167v2h1v-2zM203 169v1h1v-1zM202 170v1h1v-1zM201 171v1h1v-1zM310 76h1v1h-1zM309 77h1v1h-1zM308 78h1v1h-1zM307 79h1v1h-1zM305 80h2v1h-2zM304 81h1v1h-1zM303 82h1v1h-1zM302 83h1v1h-1zM301 84h1v1h-1zM300 85h1v1h-1zM299 86h1v1h-1zM298 87h1v1h-1zM296 88h2v1h-2zM295 89h1v1h-1zM294 90h1v1h-1zM293 91h1v1h-1zM292 92h1v1h-1zM291 93h1v1h-1zM290 94h1v1h-1zM288 95h2v1h-2zM287 96h1v1h-1zM286 97h1v1h-1zM285 98h1v1h-1zM284 99h1v1h-1zM283 100h1v1h-1zM282 101h1v1h-1zM281 102h1v1h-1zM279 103h2v1h-2zM278 104h1v1h-1zM277 105h1v1h-1zM276 106h1v1h-1zM275 107h1v1h-1zM274 108h1v1h-1zM273 109h1v1h-1zM272 110h1v1h-1zM270 111h2v1h-2zM269 112h1v1h-1zM268 113h1v1h-1zM267 114h1v1h-1zM266 115h1v1h-1zM265 116h1v1h-1zM264 117h1v1h-1zM262 118h2v1h-2zM261 119h1v1h-1zM260 120h1v1h-1zM259 121h1v1h-1zM258 122h1v1h-1zM257 123h1v1h-1zM256 124h1v1h-1zM255 125h1v1h-1zM253 126h2v1h-2zM252 127h1v1h-1zM251 128h1v1h-1zM250 129h1v1h-1zM249 130h1v1h-1zM248 131h1v1h-1zM247 132h1v1h-1zM246 133h1v1h-1zM244 134h2v1h-2zM243 135h1v1h-1zM242 136h1v1h-1zM241 137h1v1h-1zM240 138h1v1h-1zM239 139h1v1h-1zM238 140h1v1h-1zM236 141h2v1h-2zM235 142h1v1h-1zM234 143h1v1h-1zM233 144h1v1h-1zM232 145h1v1h-1zM231 146h1v1h-1zM230 147h1v1h-1zM229 148h1v1h-1zM227 149h2v1h-2zM226 150h1v1h-1zM225 151h1v1h-1zM224 152h1v1h-1zM223 153h1v1h-1zM222 154h1v1h-1zM221 155h1v1h-1zM220 156h1v1h-1zM218 157h2v1h-2zM217 158h1v1h-1zM216 159h1v1h-1zM215 160h1v1h-1zM214 161h1v1h-1zM213 162h1v1h-1zM212 163h1v1h-1zM210 164h2v1h-2zM209 165h1v1h-1zM208 166h1v1h-1zM207 167h1v1h-1zM206 168h1v1h-1zM205 169h1v1h-1zM204 170h1v1h-1zM203 171h1v1h-1zM201 172h2v1h-2zM85 166h6v1h-6zM91 167h11v1h-11zM102 168h12v1h-12zM114 169h11v1h-11zM125 170h11v1h-11zM136 171h11v1h-11zM147 172h11v1h-11zM158 173h12v1h-12zM170 174h11v1h-11zM181 175h10v1h-10zM85 246h1v1h-1zM86 245h2v1h-2zM88 244h2v1h-2zM90 243h1v1h-1zM91 242h2v1h-2zM93 241h1v1h-1zM94 240h2v1h-2zM96 239h2v1h-2zM98 238h1v1h-1zM99 237h2v1h-2zM101 236h1v1h-1zM102 235h2v1h-2zM104 234h2v1h-2zM106 233h1v1h-1zM107 232h2v1h-2zM109 231h1v1h-1zM110 230h2v1h-2zM112 229h2v1h-2zM114 228h1v1h-1zM115 227h2v1h-2zM117 226h1v1h-1zM118 225h2v1h-2zM120 224h2v1h-2zM122 223h1v1h-1zM123 222h2v1h-2zM125 221h1v1h-1zM126 220h2v1h-2zM128 219h2v1h-2zM130 218h1v1h-1zM131 217h2v1h-2zM133 216h1v1h-1zM134 215h2v1h-2zM136 214h2v1h-2zM138 213h1v1h-1zM139 212h2v1h-2zM141 211h1v1h-1zM142 210h2v1h-2zM144 209h2v1h-2zM146 208h1v1h-1zM147 207h2v1h-2zM149 206h1v1h-1zM150 205h2v1h-2zM152 204h2v1h-2zM154 203h1v1h-1zM155 202h2v1h-2zM157 201h1v1h-1zM158 200h2v1h-2zM160 199h2v1h-2zM162 198h1v1h-1zM163 197h2v1h-2zM165 196h1v1h-1zM166 195h2v1h-2zM168 194h2v1h-2zM170 193h1v1h-1zM171 192h2v1h-2zM173 191h1v1h-1zM174 190h2v1h-2zM176 189h2v1h-2zM178 188h1v1h-1zM179 187h2v1h-2zM181 186h1v1h-1zM182 185h2v1h-2zM184 184h2v1h-2zM186 183h1v1h-1zM187 182h2v1h-2zM189 181h1v1h-1zM190 180h2v1h-2zM192 179h1v1h-1z"/>
<path fill="#30c020" d="M205 270v7h1v-7zM204 258v12h1v-12zM203 245v13h1v-13zM202 233v12h1v-12zM201 220v13h1v-13zM200 208v12h1v-12zM199 195v13h1v-13zM198 183v12h1v-12zM197 181v2h1v-2zM310 266h1v1h-1zM309 265h1v1h-1zM307 264h2v1h-2zM306 263h1v1h-1zM305 262h1v1h-1zM304 261h1v1h-1zM302 260h2v1h-2zM301 259h1v1h-1zM300 258h1v1h-1zM299 257h1v1h-1zM297 256h2v1h-2zM296 255h1v1h-1zM295 254h1v1h-1zM294 253h1v1h-1zM292 252h2v1h-2zM291 251h1v1h-1zM290 250h1v1h-1zM289 249h1v1h-1zM287 248h2v1h-2zM286 247h1v1h-1zM285 246h1v1h-1zM284 245h1v1h-1zM282 244h2v1h-2zM281 243h1v1h-1zM280 242h1v1h-1zM278 241h2v1h-2zM277 240h1v1h-1zM276 239h1v1h-1zM275 238h1v1h-1zM273 237h2v1h-2zM272 236h1v1h-1zM271 235h1v1h-1zM270 234h1v1h-1zM268 233h2v1h-2zM267 232h1v1h-1zM266 231h1v1h-1zM265 230h1v1h-1zM263 229h2v1h-2zM262 228h1v1h-1zM261 227h1v1h-1zM260 226h1v1h-1zM258 225h2v1h-2zM257 224h1v1h-1zM256 223h1v1h-1zM255 222h1v1h-1zM253 221h2v1h-2zM252 220h1v1h-1zM251 219h1v1h-1zM250 218h1v1h-1zM248 217h2v1h-2zM247 216h1v1h-1zM246 215h1v1h-1zM245 214h1v1h-1zM243 213h2v1h-2zM242 212h1v1h-1zM241 211h1v1h-1zM240 210h1v1h-1zM238 209h2v1h-2zM237 208h1v1h-1zM236 207h1v1h-1zM235 206h1v1h-1zM233 205h2v1h-2zM232 204h1v1h-1zM231 203h1v1h-1zM230 202h1v1h-1zM228 201h2v1h-2zM227 200h1v1h-1zM226 199h1v1h-1zM224 198h2v1h-2zM223 197h1v1h-1zM222 196h1v1h-1zM221 195h1v1h-1zM219 194h2v1h-2zM218 193h1v1h-1zM217 192h1v1h-1zM216 191h1v1h-1zM214 190h2v1h-2zM213 189h1v1h-1zM212 188h1v1h-1zM211 187h1v1h-1zM209 186h2v1h-2zM208 185h1v1h-1zM207 184h1v1h-1zM206 183h1v1h-1zM204 182h2v1h-2zM203 181h1v1h-1zM202 180h1v1h-1z"/>
<path fill="#a09018" d="M295 276v1h1v-1zM294 275v1h1v-1zM293 274v1h1v-1zM292 273v1h1v-1zM291 272v1h1v-1zM290 271v1h1v-1zM289 270v1h1v-1zM288 269v1h1v-1zM287 268v1h1v-1zM286 267v1h1v-1zM285 266v1h1v-1zM284 265v1h1v-1zM283 264v1h1v-1zM282 263v1h1v-1zM281 262v1h1v-1zM280 261v1h1v-1zM279 260v1h1v-1zM278 259v1h1v-1zM277 258v1h1v-1zM276 257v1h1v-1zM275 256v1h1v-1zM274 255v1h1v-1zM273 254v1h1v-1zM272 253v1h1v-1zM271 251v2h1v-2zM270 250v1h1v-1zM269 249v1h1v-1zM268 248v1h1v-1zM267 247v1h1v-1zM266 246v1h1v-1zM265 245v1h1v-1zM264 244v1h1v-1zM263 243v1h1v-1zM262 242v1h1v-1zM261 241v1h1v-1zM260 240v1h1v-1zM259 239v1h1v-1zM258 238v1h1v-1zM257 237v1h1v-1zM256 236v1h1v-1zM255 235v1h1v-1zM254 234v1h1v-1zM253 233v1h1v-1zM252 232v1h1v-1zM251 231v1h1v-1zM250 230v1h1v-1zM249 229v1h1v-1zM248 228v1h1v-1zM247 227v1h1v-1zM246 226v1h1v-1zM245 225v1h1v-1zM244 224v1h1v-1zM243 223v1h1v-1zM242 222v1h1v-1zM241 221v1h1v-1zM240 220v1h1v-1zM239 219v1h1v-1zM238 218v1h1v-1zM237 217v1h1v-1zM236 216v1h1v-1zM235 215v1h1v-1zM234 214v1h1v-1zM233 213v1h1v-1zM232 212v1h1v-1zM231 211v1h1v-1zM230 210v1h1v-1zM229 209v1h1v-1zM228 208v1h1v-1zM227 207v1h1v-1zM226 206v1h1v-1zM225 205v1h1v-1zM224 204v1h1v-1zM223 203v1h1v-1zM222 201v2h1v-2zM221 200v1h1v-1zM220 199v1h1v-1zM219 198v1h1v-1zM218 197v1h1v-1zM217 196v1h1v-1zM216 195v1h1v-1zM215 194v1h1v-1zM214 193v1h1v-1zM213 192v1h1v-1zM212 191v1h1v-1zM211 190v1h1v-1zM210 189v1h1v-1zM209 188v1h1v-1zM208 187v1h1v-1zM207 186v1h1v-1zM206 185v1h1v-1zM205 184v1h1v-1zM204 183v1h1v-1zM203 182v1h1v-1zM202 181v1h1v-1zM201 180v1h1v-1z"/>
<path fill="#6b3a10" d="M85 106h1v1h-1zM86 107h2v1h-2zM88 108h2v1h-2zM90 109h1v1h-1zM91 110h2v1h-2zM93 111h1v1h-1zM94 112h2v1h-2zM96 113h2v1h-2zM98 114h1v1h-1zM99 115h2v1h-2zM101 116h1v1h-1zM102 117h2v1h-2zM104 118h2v1h-2zM106 119h1v1h-1zM107 120h2v1h-2zM109 121h1v1h-1zM110 122h2v1h-2zM112 123h2v1h-2zM114 124h1v1h-1zM115 125h2v1h-2zM117 126h1v1h-1zM118 127h2v1h-2zM120 128h2v1h-2zM122 129h1v1h-1zM123 130h2v1h-2zM125 131h1v1h-1zM126 132h2v1h-2zM128 133h2v1h-2zM130 134h1v1h-1zM131 135h2v1h-2zM133 136h1v1h-1zM134 137h2v1h-2zM136 138h2v1h-2zM138 139h1v1h-1zM139 140h2v1h-2zM141 141h1v1h-1zM142 142h2v1h-2zM144 143h2v1h-2zM146 144h1v1h-1zM147 145h2v1h-2zM149 146h1v1h-1zM150 147h2v1h-2zM152 148h2v1h-2zM154 149h1v1h-1zM155 150h2v1h-2zM157 151h1v1h-1zM158 152h2v1h-2zM160 153h2v1h-2zM162 154h1v1h-1zM163 155h2v1h-2zM165 156h1v1h-1zM166 157h2v1h-2zM168 158h2v1h-2zM170 159h1v1h-1zM171 160h2v1h-2zM173 161h1v1h-1zM174 162h2v1h-2zM176 163h2v1h-2zM178 164h1v1h-1zM179 165h2v1h-2zM181 166h1v1h-1zM182 167h2v1h-2zM184 168h2v1h-2zM186 169h1v1h-1zM187 170h2v1h-2zM189 171h1v1h-1zM190 172h2v1h-2zM192 173h1v1h-1zM309 136h2v1h-2zM306 137h3v1h-3zM303 138h3v1h-3zM301 139h2v1h-2zM298 140h3v1h-3zM295 141h3v1h-3zM292 142h3v1h-3zM289 143h3v1h-3zM286 144h3v1h-3zM284 145h2v1h-2zM281 146h3v1h-3zM278 147h3v1h-3zM275 148h3v1h-3zM272 149h3v1h-3zM270 150h2v1h-2zM267 151h3v1h-3zM264 152h3v1h-3zM261 153h3v1h-3zM258 154h3v1h-3zM255 155h3v1h-3zM253 156h2v1h-2zM250 157h3v1h-3zM247 158h3v1h-3zM244 159h3v1h-3zM241 160h3v1h-3zM238 161h3v1h-3zM236 162h2v1h-2zM233 163h3v1h-3zM230 164h3v1h-3zM227 165h3v1h-3zM224 166h3v1h-3zM222 167h2v1h-2zM219 168h3v1h-3zM216 169h3v1h-3zM213 170h3v1h-3zM210 171h3v1h-3zM207 172h3v1h-3zM205 173h2v1h-2zM203 174h2v1h-2z"/>
<path fill="#f0a818" d="M309 206h2v1h-2zM305 205h4v1h-4zM301 204h4v1h-4zM297 203h4v1h-4zM294 202h3v1h-3zM290 201h4v1h-4zM286 200h4v1h-4zM282 199h4v1h-4zM278 198h4v1h-4zM275 197h3v1h-3zM271 196h4v1h-4zM267 195h4v1h-4zM263 194h4v1h-4zM260 193h3v1h-3zM256 192h4v1h-4zM252 191h4v1h-4zM248 190h4v1h-4zM245 189h3v1h-3zM241 188h4v1h-4zM237 187h4v1h-4zM233 186h4v1h-4zM230 185h3v1h-3zM226 184h4v1h-4zM222 183h4v1h-4zM218 182h4v1h-4zM214 181h4v1h-4zM211 180h3v1h-3zM207 179h4v1h-4zM203 178h4v1h-4z"/>
<rect x="195" y="171" width="1" height="1" fill="#ff40ff"/>
<rect x="196" y="171" width="1" height="1" fill="#1020ff"/>
<rect x="197" y="171" width="1" height="1" fill="#00d0ff"/>
<rect x="198" y="171" width="1" height="1" fill="#1020ff"/>
<rect x="193" y="172" width="1" height="1" fill="#00d0ff"/>
<rect x="194" y="172" width="1" height="1" fill="#00d0ff"/>
<rect x="195" y="172" width="1" height="1" fill="#40c020"/>
<rect x="196" y="172" width="1" height="1" fill="#00d0ff"/>
<rect x="200" y="172" width="1" height="1" fill="#40c020"/>
<rect x="201" y="172" width="1" height="1" fill="#ff5a10"/>
<rect x="191" y="173" width="1" height="1" fill="#ff40ff"/>
<rect x="192" y="173" width="1" height="1" fill="#ff40ff"/>
<rect x="197" y="173" width="1" height="1" fill="#ff5a10"/>
<rect x="198" y="173" width="1" height="1" fill="#00d0ff"/>
<rect x="193" y="174" width="1" height="1" fill="#ff5a10"/>
<rect x="196" y="174" width="1" height="1" fill="#f0b020"/>
<rect x="200" y="174" width="1" height="1" fill="#00d0ff"/>
<rect x="201" y="174" width="1" height="1" fill="#40c020"/>
<rect x="202" y="174" width="1" height="1" fill="#ffffff"/>
<rect x="203" y="174" width="1" height="1" fill="#8040ff"/>
<rect x="190" y="175" width="1" height="1" fill="#00d0ff"/>
<rect x="194" y="175" width="1" height="1" fill="#ffffff"/>
<rect x="202" y="175" width="1" height="1" fill="#f0b020"/>
<rect x="191" y="176" width="1" height="1" fill="#40c020"/>
<rect x="193" y="176" width="1" height="1" fill="#8040ff"/>
<rect x="194" y="176" width="1" height="1" fill="#00d0ff"/>
<rect x="196" y="176" width="1" height="1" fill="#f0b020"/>
<rect x="197" y="176" width="1" height="1" fill="#ff5a10"/>
<rect x="198" y="176" width="1" height="1" fill="#8040ff"/>
<rect x="199" y="176" width="1" height="1" fill="#8040ff"/>
<rect x="200" y="176" width="1" height="1" fill="#f0b020"/>
<rect x="204" y="176" width="1" height="1" fill="#40c020"/>
<rect x="192" y="177" width="1" height="1" fill="#ff5a10"/>
<rect x="193" y="177" width="1" height="1" fill="#ff40ff"/>
<rect x="194" y="177" width="1" height="1" fill="#ff5a10"/>
<rect x="195" y="177" width="1" height="1" fill="#ff40ff"/>
<rect x="196" y="177" width="1" height="1" fill="#1020ff"/>
<rect x="197" y="177" width="1" height="1" fill="#ffffff"/>
<rect x="199" y="177" width="1" height="1" fill="#ff40ff"/>
<rect x="204" y="177" width="1" height="1" fill="#40c020"/>
<rect x="191" y="178" width="1" height="1" fill="#40c020"/>
<rect x="192" y="178" width="1" height="1" fill="#40c020"/>
<rect x="193" y="178" width="1" height="1" fill="#00d0ff"/>
<rect x="195" y="178" width="1" height="1" fill="#00d0ff"/>
<rect x="196" y="178" width="1" height="1" fill="#1020ff"/>
<rect x="197" y="178" width="1" height="1" fill="#ff40ff"/>
<rect x="201" y="178" width="1" height="1" fill="#ff5a10"/>
<rect x="203" y="178" width="1" height="1" fill="#f0b020"/>
<rect x="194" y="179" width="1" height="1" fill="#8040ff"/>
<rect x="198" y="179" width="1" height="1" fill="#00d0ff"/>
<rect x="193" y="180" width="1" height="1" fill="#ffffff"/>
<rect x="194" y="180" width="1" height="1" fill="#1020ff"/>
<rect x="196" y="180" width="1" height="1" fill="#00d0ff"/>
<rect x="198" y="180" width="1" height="1" fill="#ffffff"/>
<rect x="200" y="180" width="1" height="1" fill="#ff5a10"/>
<rect x="196" y="181" width="1" height="1" fill="#ff5a10"/>
</svg>
<div class="abs" style="left:1px;top:9px;width:7px;height:1px;background:#f0f"></div>
</div>
</div>
<div id="task">
<div class="tbtn" style="left:3px;width:42px;background:#006400;border-color:#0a3a1a"></div>
<div class="abs" style="left:7px;top:6px;font-family:'Liberation Mono',monospace;font-size:15px;letter-spacing:-1px;line-height:16px;color:#fff;white-space:pre">Меню</div>
<div class="tbtn" style="left:50px;width:15px;background:#0a82ff"></div>
<svg class="abs" style="left:53px;top:6px" width="9" height="12" viewBox="0 0 9 12"><path d="M4.5 1v10M2 3.5L4.5 1L7 3.5M2 8.5L4.5 11L7 8.5" stroke="#fff" stroke-width="1.2" fill="none"/></svg>
<div class="tbtn" style="left:72px;width:73px;background:#7a88a8;border-color:#3c4a78"></div>
<div class="t6" style="left:75px;top:2px">KFAR</div>
<div class="tbtn" style="left:147px;width:73px;background:#6a7899;border-color:#3a4874"></div>
<div class="t6" style="left:150px;top:2px">MEFORTH</div>
<div class="tbtn" style="left:729px;width:17px;background:#0a82ff"></div>
<div class="t6" style="left:732px;top:2px">En</div>
<div class="tbtn" style="left:749px;width:7px;background:#ff0000"></div>
<div class="tbtn" style="left:759px;width:38px;background:#0a82ff"></div>
<div class="t6" style="left:763px;top:2px">17:27</div>
</div>
<svg class="abs" style="left:133px;top:-1px" width="14" height="20" viewBox="0 0 14 20"><path d="M1.5 1.5L1.5 15.5L4.8 12.6L7.2 17.6L9.6 16.6L7.4 11.6L11.8 11.2Z" fill="#fff" stroke="#000" stroke-width="1.1" stroke-linejoin="miter" stroke-miterlimit="2.5"/></svg>
</div>
<div id="sbar"></div>
<svg class="abs" style="left:1101px;top:749px" width="16" height="16" viewBox="0 0 16 16"><path d="M.5 .5H13.5L15.5 2.5V15.5H.5Z" fill="#2f7ef0" stroke="#1554b8"/><rect x="3" y="1" width="8.6" height="5" fill="#e8f0ff"/><rect x="8" y="1.6" width="2" height="3.6" fill="#2f6ed8"/><rect x="2.6" y="8" width="10.8" height="7" fill="#fbfbff"/><rect x="3.6" y="12.4" width="8.8" height="2" fill="#38b838"/></svg>
<svg class="abs" style="left:1122px;top:749px" width="16" height="16" viewBox="0 0 16 16"><path d="M.6 15.2L1.4 11.4L9 3.4L12.8 7.2L4.6 14.8Z" fill="#2f8af4" stroke="#1554b8" stroke-width=".9"/><path d="M10.2 3.4L12.8 .8L15.4 3.4L12.8 6Z" fill="#f8f8f8" stroke="#555" stroke-width=".8"/><path d="M3.4 12L9 6" stroke="#a8d8ff" stroke-width="1.6"/></svg>
<svg class="abs" style="left:1143px;top:749px" width="16" height="16" viewBox="0 0 16 16"><rect x="5.5" y=".8" width="9.6" height="8.4" fill="#f2f2f2" stroke="#444" stroke-width=".9"/><rect x="6.8" y="2" width="7" height="5.4" fill="#2b86f4"/><rect x=".8" y="5.6" width="9.6" height="8.4" fill="#f2f2f2" stroke="#444" stroke-width=".9"/><rect x="2.1" y="6.9" width="7" height="5.4" fill="#2b86f4"/><path d="M3 15.2H8.4" stroke="#444" stroke-width="1.2"/></svg>
<svg class="abs" style="left:1164px;top:749px" width="16" height="16" viewBox="0 0 16 16"><path d="M.8 3.4H5.4L6.8 1.6H14L15 3V5" fill="#dcdcdc" stroke="#b0b0b0" stroke-width=".8"/><rect x=".8" y="4.4" width="14.4" height="10" fill="#d0d0d0" stroke="#aaa" stroke-width=".8"/><path d="M1.4 5.2H14.6" stroke="#ececec"/></svg>
<svg class="abs" style="left:1184px;top:749px" width="16" height="16" viewBox="0 0 16 16"><rect x="4.6" y="4" width="11" height="8.6" rx="1" fill="#3a3a3a" stroke="#111" stroke-width=".8"/><path d="M5.2 5.2H15" stroke="#8a8a8a" stroke-width="1"/><path d="M.8 5.2L4.6 6.6V10.4L.8 11.8Z" fill="#222"/><rect x="1.6" y="3.2" width="2.4" height="1.6" fill="#222"/></svg>
<svg class="abs" style="left:1205px;top:749px" width="16" height="16" viewBox="0 0 16 16"><rect x="1.4" y="1.4" width="13.2" height="13.2" rx="1.4" fill="#d6d6d6" stroke="#a8a8a8" stroke-width="1" stroke-dasharray="1 1"/><rect x="3.2" y="3.2" width="9.6" height="9.6" fill="#cacaca" stroke="#b4b4b4" stroke-width=".6"/><path d="M6.2 5V9.4Q6.2 11 8 11Q9.8 11 9.8 9.4V5" fill="none" stroke="#f6f6f6" stroke-width="1.5"/></svg>
<div class="abs" style="left:1227px;top:749px;width:1px;height:16px;background:#cfcdca"></div>
<svg class="abs" style="left:1234px;top:749px" width="16" height="16" viewBox="0 0 16 16"><ellipse cx="8" cy="8.2" rx="6.4" ry="7.6" transform="rotate(38 8 8.2)" fill="#2d86f2" stroke="#134fb0" stroke-width=".9"/><path d="M3.4 9.4Q8 5.6 12.8 2.6" stroke="#fff" stroke-width="1" fill="none"/><path d="M8.6 6.6L11.6 3.2" stroke="#0c2a66" stroke-width="1.6"/><path d="M3 11Q5 13.6 8.6 14.6" stroke="#b8dcff" stroke-width="1.4" fill="none"/></svg>
<svg class="abs" style="left:1255px;top:749px" width="16" height="16" viewBox="0 0 16 16"><rect x=".9" y=".9" width="14.2" height="14.2" rx="1.8" fill="#fbfbfb" stroke="#4a4a4a" stroke-width="1.2"/><path d="M5.8 3H10.2V7H13L8 12.6L3 7H5.8Z" fill="#54d414" stroke="#1f7a08" stroke-width=".8"/></svg>
<div class="abs" style="left:1274.4px;top:749px;font-size:15.4px;line-height:18px;color:#4c4c4c;white-space:pre;letter-spacing:-.1px">Правый Ctrl</div>
</body></html>
